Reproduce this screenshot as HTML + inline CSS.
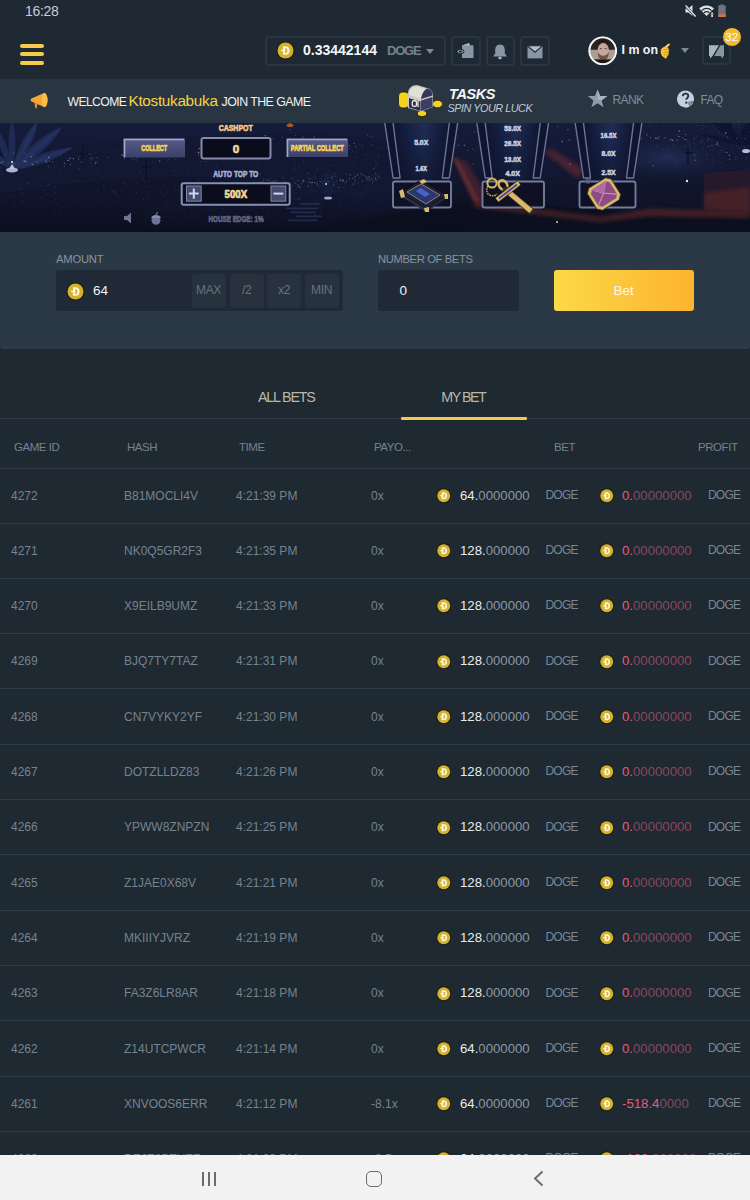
<!DOCTYPE html>
<html><head><meta charset="utf-8">
<style>
*{margin:0;padding:0;box-sizing:border-box}
html,body{width:750px;height:1200px;overflow:hidden;background:#1e2932;font-family:"Liberation Sans",sans-serif;position:relative}
.a{position:absolute}
.t{position:absolute;white-space:nowrap;line-height:1}
#hdr{left:0;top:0;width:750px;height:78.5px;background:#1f2933}
#wel{left:0;top:79px;width:750px;height:44px;background:#2a3542}
#game{left:0;top:123px;width:750px;height:109px;background:linear-gradient(#1a2445,#10162b 55%,#0b0f1d);overflow:hidden}
#panel{left:0;top:232px;width:750px;height:117px;background:#2b3947;border-bottom:2px solid #2f3c48;border-radius:0 0 3px 3px}
#nav{left:0;top:1155px;width:750px;height:45px;background:#f2f2f2}
.hl{position:absolute;left:0;width:750px;height:1px;background:#2f3a45}
.coin{position:absolute}
.row{position:absolute;left:0;width:750px;height:55.3px}
.row .c{position:absolute;top:20.3px;white-space:nowrap;line-height:14px;font-size:12px;color:#76838f}
.row .rl{position:absolute;left:0;top:54.3px;width:750px;height:1px;background:#2e3a44}
.id{left:11px}.hs{left:124px}.tm{left:236px}.po{left:371px}
.am{left:460px;font-size:13.2px!important;color:#8c98a3!important}
.am b{font-weight:normal;color:#e9ecef}
.pf{left:622px;font-size:13.2px!important;color:#8a485c!important}
.pf b{font-weight:normal;color:#e35d79}
.dg1{left:545.5px;top:19.5px!important;letter-spacing:-0.8px;color:#7a8692!important}.dg2{left:708px;top:19.5px!important;letter-spacing:-0.8px;color:#7a8692!important}
.cn{position:absolute;top:19.6px;width:15.5px;height:15.5px}
.c1{left:436.3px}.c2{left:598.5px}
.hd{position:absolute;top:441px;font-size:11.5px;line-height:12px;color:#75828e;white-space:nowrap;letter-spacing:-0.45px}
.btn{width:29.5px;height:29.5px;border:2px solid #2b3541;border-radius:3.5px}
.pb{top:274px;width:34px;height:33.5px;background:#27323e;border-radius:3px;color:#66737f;font-size:12px;line-height:33.5px;text-align:center;letter-spacing:-0.3px}
</style></head><body>
<svg width="0" height="0" style="position:absolute"><defs>
<symbol id="dg" viewBox="0 0 20 20"><circle cx="10" cy="10" r="9.6" fill="#1d1b12"/><circle cx="10" cy="10" r="8.4" fill="#d3b32d"/>
<path fill="#fbf6dc" fill-rule="evenodd" d="M7.3 5.4 H10 C12.8 5.4 14.3 7.3 14.3 10 C14.3 12.7 12.8 14.6 10 14.6 H7.3 Z M9.5 7.5 V12.5 H9.9 C11.4 12.5 12.1 11.5 12.1 10 C12.1 8.5 11.4 7.5 9.9 7.5 Z"/>
<rect x="5.4" y="9.2" width="4.6" height="1.5" fill="#fbf6dc"/></symbol>
</defs></svg>
<div id="hdr" class="a"></div>
<div class="t" style="left:25px;top:3.6px;font-size:14px;color:#c8ccd1;letter-spacing:-0.3px">16:28</div>
<!-- status icons -->
<svg class="a" style="left:684px;top:4px" width="44" height="14" viewBox="0 0 44 14">
 <path d="M1.5 4.6h2.8l4.2-3.6v11l-4.2-3.6H1.5z" fill="#dde1e5"/>
 <path d="M1 1.2l10.6 11.4" stroke="#1f2933" stroke-width="2.6"/>
 <path d="M1.6 1.6l10 10.8" stroke="#dde1e5" stroke-width="1.5"/>
 <path d="M15.2 4.6 C19.2 0.6 26 0.6 30 4.6 L22.6 12 Z" fill="#dde1e5"/>
 <path d="M17.6 6.6 C20.6 4 24.6 4 27.6 6.6" stroke="#1f2933" stroke-width="1.2" fill="none"/>
 <path d="M19.8 8.8 C21.6 7.4 23.6 7.4 25.4 8.8" stroke="#1f2933" stroke-width="1.2" fill="none"/>
 <path d="M26.5 10.5 l1.6 -2.6 1.6 2.6z M27.2 11 h1.8 v2 h-1.8z" fill="#dde1e5"/>
 <rect x="34.3" y="1.3" width="7.4" height="11.7" rx="1" fill="#6f757b"/>
 <rect x="34.3" y="10.2" width="7.4" height="2.8" rx="0.6" fill="#d9703f"/>
 <rect x="36.6" y="0.3" width="2.8" height="1.3" fill="#6f757b"/>
</svg>
<!-- hamburger -->
<div class="a" style="left:20px;top:43.6px;width:24px;height:4px;border-radius:2px;background:#f6cb4a"></div>
<div class="a" style="left:20px;top:52.3px;width:24px;height:4px;border-radius:2px;background:#f6cb4a"></div>
<div class="a" style="left:20px;top:61px;width:24px;height:4px;border-radius:2px;background:#f6cb4a"></div>
<!-- balance -->
<div class="a" style="left:265px;top:36px;width:181px;height:29.5px;border:2px solid #2b3541;border-radius:3.5px"></div>
<svg class="coin" style="left:275.5px;top:41px" width="19" height="19" viewBox="0 0 20 20"><use href="#dg"/></svg>
<div class="t" style="left:303px;top:42.5px;font-size:14px;font-weight:bold;color:#f4f5f6">0.33442144</div>
<div class="t" style="left:387px;top:44.3px;font-size:13px;font-weight:bold;color:#74818e;letter-spacing:-1.2px">DOGE</div>
<div class="a" style="left:425.5px;top:48.5px;width:0;height:0;border-left:4px solid transparent;border-right:4px solid transparent;border-top:5px solid #7c8997"></div>
<!-- icon buttons -->
<div class="a btn" style="left:451px;top:36px"></div>
<div class="a btn" style="left:485.5px;top:36px"></div>
<div class="a btn" style="left:520px;top:36px"></div>
<svg class="a" style="left:456px;top:42px" width="19" height="17" viewBox="0 0 19 17">
 <path d="M6 3.5 L13 1 L14 3.2 H17.5 V16 H6 Z" fill="#8796a5"/>
 <path d="M6 3.5 H14 L13 1 Z" fill="#a9b5c0"/>
 <ellipse cx="4.5" cy="9.5" rx="3.6" ry="2.2" fill="#8796a5" stroke="#1e2731" stroke-width="1"/>
 <ellipse cx="4.5" cy="9.5" rx="1.6" ry="0.9" fill="#1e2731"/>
</svg>
<svg class="a" style="left:492px;top:43px" width="16" height="17" viewBox="0 0 16 17">
 <path d="M8 1.5 C4.3 1.5 3.2 4.5 3.2 7.5 V10.6 L1 13.5 H15 L12.8 10.6 V7.5 C12.8 4.5 11.7 1.5 8 1.5Z" fill="#8796a5"/>
 <ellipse cx="8" cy="15" rx="1.8" ry="1.3" fill="#a9b5c0"/>
</svg>
<svg class="a" style="left:527px;top:44.5px" width="16" height="14" viewBox="0 0 16 14">
 <rect x="0.5" y="0.8" width="15" height="12.6" fill="#8796a5"/>
 <path d="M0.5 0.8 L8 7.2 L15.5 0.8Z" fill="#b3bec8" stroke="#1e2731" stroke-width="1.1"/>
</svg>
<div class="a" style="left:568px;top:35px;width:1px;height:32px;background:#212b36"></div>
<!-- avatar -->
<svg class="a" style="left:587.5px;top:36px" width="29.5" height="29.5" viewBox="0 0 30 30">
 <defs><clipPath id="avc"><circle cx="15" cy="15" r="13"/></clipPath></defs>
 <circle cx="15" cy="15" r="14.2" fill="#f4f4f4"/>
 <g clip-path="url(#avc)">
  <rect width="30" height="30" fill="#2b2624"/>
  <rect x="0" y="14" width="30" height="10" fill="#a8a097"/>
  <ellipse cx="15" cy="8" rx="10" ry="7" fill="#2a2320"/>
  <ellipse cx="15.5" cy="15" rx="5.8" ry="8" fill="#c4a69a"/>
  <path d="M9.8 16 C10 22 12.5 24.5 15.5 24.5 C18.5 24.5 21 22 21.2 16 C20 19 18 20 15.5 20 C13 20 11 19 9.8 16Z" fill="#6e5242"/>
  <path d="M9.5 9 C10.5 6.5 13 5.8 15.5 5.8 C18 5.8 20.5 6.5 21.5 9 L21.5 7 C20 4 17 3.5 15.5 3.5 C14 3.5 11 4 9.5 7Z" fill="#1f1a18"/>
  <rect x="0" y="24" width="30" height="6" fill="#1a1716"/>
  <path d="M12 12.8 H14 M17 12.8 H19" stroke="#4a3a32" stroke-width="0.9"/>
 </g>
 <circle cx="15" cy="15" r="13.6" fill="none" stroke="#f4f4f4" stroke-width="2"/>
</svg>
<div class="t" style="left:621.5px;top:44px;font-size:12.4px;font-weight:bold;color:#f2f3f4">I m on</div>
<svg class="a" style="left:658px;top:41.5px" width="14" height="18" viewBox="-1 -1 14 18">
 <path d="M1.3 8.5 C1.3 5.5 3.5 4 5.8 3.2 L9.6 0.4 C10.7 -0.3 11.8 0.9 11 1.9 L8.9 4.6 C10.3 5.6 10.6 7.4 9.9 8.9 C10.4 10.4 9.9 11.9 8.9 12.9 L7.4 15.6 C6.9 16.4 5.8 16.2 5.7 15.3 C2.9 14 1.3 11.4 1.3 8.5Z" fill="#f4c340" stroke="#2e2412" stroke-width="0.7"/>
 <path d="M4.5 7.2 L9.6 6.2 M4.6 9.6 L9.6 9.2 M4.8 11.8 L8.8 12" stroke="#c98f1e" stroke-width="0.8" fill="none"/>
 <path d="M9.6 0.8 L7 3.8" stroke="#fbe7a0" stroke-width="1" />
</svg>
<div class="a" style="left:681px;top:48px;width:0;height:0;border-left:4.5px solid transparent;border-right:4.5px solid transparent;border-top:5.5px solid #7a8795"></div>
<div class="a btn" style="left:701.5px;top:35.8px"></div>
<svg class="a" style="left:708px;top:43.5px" width="17" height="16" viewBox="0 0 17 16">
 <path d="M1 1.3 H11 L4.5 12 L2 14.5 V12 H1 Z" fill="#a7b4c1"/>
 <path d="M12.5 1.3 H16 V12 H15 V14.8 L12.6 12 H6.2 Z" fill="#8796a5"/>
</svg>
<div class="a" style="left:721.5px;top:26.5px;width:20.5px;height:20.5px;border-radius:50%;background:#f1bc2f;border:1.5px solid #1e2731"></div>
<div class="t" style="left:721.5px;top:31.5px;width:20.5px;text-align:center;font-size:11.5px;color:#fff">32</div>
<div id="wel" class="a"></div>
<svg class="a" style="left:29px;top:91px" width="21" height="19" viewBox="0 0 21 19">
 <path d="M2.5 7.5 L15 2 C16.5 1.4 18.5 4.5 18.5 9 C18.5 13.5 16.5 16.6 15 16 L2.5 10.5 C1.5 10 1.5 8 2.5 7.5Z" fill="#f7a53b"/>
 <path d="M15 2 C16.5 1.4 18.5 4.5 18.5 9 C18.5 13.5 16.5 16.6 15 16 C13.8 15.4 13 12.5 13 9 C13 5.5 13.8 2.6 15 2Z" fill="#f9bf45"/>
 <path d="M5.5 11.5 L8.5 12.8 L7.6 17 C7.4 17.8 6.2 17.6 6.2 16.8Z" fill="#f28f2f"/>
</svg>
<div class="t" style="left:67.5px;top:95.5px;font-size:12.2px;color:#eef0f2;letter-spacing:-0.6px">WELCOME</div>
<div class="t" style="left:128.5px;top:92.5px;font-size:15.3px;color:#f6d443;letter-spacing:-0.3px">Ktostukabuka</div>
<div class="t" style="left:221.5px;top:95.5px;font-size:12.4px;color:#eef0f2;letter-spacing:-0.55px">JOIN THE GAME</div>
<!-- tasks chest -->
<svg class="a" style="left:394px;top:80px" width="52" height="40" viewBox="0 0 52 40">
 <rect x="4.5" y="12" width="10.5" height="16" rx="4" fill="#f4d31f" stroke="#1a1a10" stroke-width="0.8"/>
 <ellipse cx="43.5" cy="24" rx="5" ry="3.8" fill="#f4d31f" stroke="#1a1a10" stroke-width="0.8"/>
 <ellipse cx="28" cy="33.5" rx="4.6" ry="3" fill="#f4d31f" stroke="#1a1a10" stroke-width="0.8"/>
 <path d="M14 14 C14 8 18 5 23 5 L33 8 C37 9 39 12 39 16 L39 27 L27 31.5 L14 28 Z" fill="#c9c8bf"/>
 <path d="M15 15 C15 10 18 6.5 23 6.5 L32 9 C30 11 28 14 27 19Z" fill="#e2e0d6"/>
 <path d="M27 19 L38.5 15.5 C38.5 11.5 36.5 9.5 33.5 8.5 C30.5 9.5 28 13 27 19Z" fill="#34365c"/>
 <path d="M27 20.5 L38.5 17 L38.5 27 L27 31Z" fill="#3b3d63"/>
 <path d="M15 17.5 L26.5 21 L26.5 31 L15 27.5Z" fill="#2c2e52"/>
 <path d="M15 17.5 L26.5 21" stroke="#e2e0d6" stroke-width="1"/>
 <rect x="18.3" y="20.8" width="4.2" height="5.6" rx="1.6" fill="none" stroke="#eceae2" stroke-width="1.4"/>
 <path d="M24 21 V27" stroke="#eceae2" stroke-width="1.3"/>
</svg>
<div class="t" style="left:449px;top:86.5px;font-size:14.5px;font-weight:bold;font-style:italic;color:#f4f5f6;letter-spacing:-0.4px">TASKS</div>
<div class="t" style="left:447.5px;top:103.2px;font-size:10.8px;font-style:italic;color:#c3cad2;letter-spacing:-0.45px">SPIN YOUR LUCK</div>
<svg class="a" style="left:587px;top:89px" width="21" height="19" viewBox="0 0 21 19">
 <path d="M10.5 0.5 L13.1 6.9 L20.2 7.1 L14.6 11.4 L16.6 18.3 L10.5 14.3 L4.4 18.3 L6.4 11.4 L0.8 7.1 L7.9 6.9Z" fill="#8e9cad"/>
 <path d="M10.5 0.5 L13.1 6.9 L20.2 7.1 L14.6 11.4 L10.5 10.5Z" fill="#a8b4c2"/>
</svg>
<div class="t" style="left:612.5px;top:93.5px;font-size:12px;color:#7f8c99;letter-spacing:-0.6px">RANK</div>
<svg class="a" style="left:676px;top:90px" width="20" height="18" viewBox="0 0 20 18">
 <path d="M9.5 0.5 A8.5 8.5 0 1 0 17.7 11.2 L13 16.5 Z" fill="#c5d0dc"/>
 <path d="M9.5 0.5 A8.5 8.5 0 0 1 17.7 11.2 L12.3 12 L13 16.5 A8.5 8.5 0 0 1 9.5 17.5" fill="#c5d0dc"/>
 <path d="M17.7 11.2 L12.3 12 L13 16.5Z" fill="#7e8b9a"/>
 <path d="M6.8 6.3 C6.8 4.5 8 3.6 9.6 3.6 C11.2 3.6 12.3 4.6 12.3 6 C12.3 7.8 10.3 8 10.3 9.8" stroke="#2a3542" stroke-width="1.9" fill="none"/>
 <circle cx="10.3" cy="12.6" r="1.2" fill="#2a3542"/>
</svg>
<div class="t" style="left:700.5px;top:93.5px;font-size:12px;color:#7f8c99;letter-spacing:-0.7px">FAQ</div>
<div id="game" class="a"></div>
<svg class="a" style="left:0;top:123px" width="750" height="109" viewBox="0 0 750 109">
<defs>
<linearGradient id="sky" x1="0" y1="0" x2="0" y2="1"><stop offset="0" stop-color="#151c3a"/><stop offset="0.45" stop-color="#121831"/><stop offset="1" stop-color="#0c1020"/></linearGradient>
<radialGradient id="hill" cx="0.5" cy="0.5" r="0.5"><stop offset="0" stop-color="#26345f" stop-opacity="0.9"/><stop offset="1" stop-color="#1a2348" stop-opacity="0"/></radialGradient>
<linearGradient id="pil" x1="0" y1="0" x2="1" y2="0"><stop offset="0" stop-color="#0f1530"/><stop offset="0.55" stop-color="#1f2d58"/><stop offset="1" stop-color="#101632"/></linearGradient>
<linearGradient id="pilv" x1="0" y1="0" x2="0" y2="1"><stop offset="0" stop-color="#0a0e20" stop-opacity="0"/><stop offset="1" stop-color="#0a0e20" stop-opacity="0.55"/></linearGradient>
<linearGradient id="btn" x1="0" y1="0" x2="0" y2="1"><stop offset="0" stop-color="#565d88"/><stop offset="1" stop-color="#3a4068"/></linearGradient>
<linearGradient id="red" x1="0" y1="0" x2="0" y2="1"><stop offset="0" stop-color="#3a1f2a"/><stop offset="1" stop-color="#20131d"/></linearGradient>
<linearGradient id="redr" x1="0" y1="0" x2="1" y2="1"><stop offset="0" stop-color="#1d1a33"/><stop offset="1" stop-color="#5a2a2a"/></linearGradient>
</defs>
<rect width="750" height="109" fill="url(#sky)"/>
<filter id="bl"><feGaussianBlur stdDeviation="2"/></filter>
<filter id="bl1"><feGaussianBlur stdDeviation="1"/></filter>

<path d="M0 30 C60 22 140 16 250 12 C330 10 380 15 400 20 L400 109 L0 109Z" fill="#121831"/>
<path d="M0 70 C80 58 160 52 230 55 L230 109 L0 109Z" fill="#10152c"/>
<path d="M140 90 C200 60 300 50 420 55 L420 109 L140 109Z" fill="#121833" opacity="0.9"/>
<rect x="0" y="86" width="480" height="23" fill="#0b0e1c" opacity="0.0"/>
<ellipse cx="668" cy="35" rx="62" ry="22" fill="url(#hill)" opacity="0.8"/>
<path d="M452 20 L455 35 L480 78 L668 94 L750 90 L750 109 L430 109 L430 20Z" fill="#0f1327" opacity="0.0"/>
<path d="M474 77 L668 93 L750 89 L750 109 L300 109 C340 100 380 92 474 77Z" fill="#0c0f1f" opacity="0.85"/>
<g filter="url(#bl)" opacity="0.75"><path d="M452 34 L466 38 L492 80 L474 80Z" fill="#4f2430"/><path d="M543 28 L552 26 L584 46 L578 56Z" fill="#5a2830"/><path d="M474 78 L600 94 L649 86 L750 88 L750 95 L649 93 L600 99 L474 84Z" fill="#5a2628"/></g>
<path d="M452 34 L458 36 L480 78 L474 79Z" fill="#7a3430" opacity="0.5" filter="url(#bl1)"/>
<path d="M704 50 L750 47 L750 90 L704 86Z" fill="#2a1a2a" opacity="0.8"/>
<path d="M704 70 L750 64 L750 90 L704 86Z" fill="#5a2828" opacity="0.6" filter="url(#bl)"/>
<path d="M12 47 Q9.8 20.9 -4 4 Q-3.4 25.8 12 47Z" fill="#24325f" opacity="0.7"/>
<path d="M12 47 Q19.0 18.9 12 -4 Q5.0 18.9 12 47Z" fill="#24325f" opacity="0.7"/>
<path d="M12 47 Q34.3 24.3 38 -2 Q18.3 15.8 12 47Z" fill="#24325f" opacity="0.7"/>
<path d="M12 47 Q46.7 31.7 62 4 Q32.3 15.0 12 47Z" fill="#24325f" opacity="0.7"/>
<path d="M12 47 Q49.2 42.8 74 24 Q43.0 25.9 12 47Z" fill="#24325f" opacity="0.7"/>
<path d="M12 47 Q6.2 33.3 -6 30 Q-2.0 42.0 12 47Z" fill="#24325f" opacity="0.7"/>
<path d="M12 47 Q29.8 21.9 38 -2 Q22.8 18.2 12 47Z" fill="#2c3c70" opacity="0.4"/>
<path d="M12 47 Q42.8 27.1 62 4 Q36.2 19.6 12 47Z" fill="#2c3c70" opacity="0.4"/>
<path d="M12 47 Q47.5 38.1 74 24 Q44.7 30.6 12 47Z" fill="#2c3c70" opacity="0.4"/>
<ellipse cx="12" cy="47" rx="6" ry="2.5" fill="#a9b4d4"/><path d="M9 46 L12 41 L15 46Z" fill="#b9c3e0"/><circle cx="12" cy="39" r="1" fill="#e0e5f5"/>
<path d="M83 25 V42 M79 31 H88" stroke="#0b0f20" stroke-width="1.5" opacity="0.8"/>
<path d="M146 37 V58 M141 44 H151" stroke="#0b0f20" stroke-width="1.5" opacity="0.8"/>
<path d="M688 25 V42 M684 30 H693" stroke="#0b0f20" stroke-width="1.5" opacity="0.8"/>
<g fill="#0e1330" opacity="0.9"><path d="M740 22 C728 14 718 6 712 0 L730 0 C735 8 740 14 740 22Z"/><path d="M740 22 C738 12 742 5 748 0 L750 0 L750 22Z"/><path d="M740 22 C725 20 712 16 700 10 C715 12 730 16 740 22Z"/></g>
<ellipse cx="746" cy="28" rx="4" ry="2" fill="#b4bedc"/>
<circle cx="242.9" cy="28.4" r="0.5" fill="#c9d3f2" opacity="0.49"/>
<circle cx="70.6" cy="41.8" r="0.5" fill="#c9d3f2" opacity="0.52"/>
<circle cx="161.0" cy="34.3" r="0.6" fill="#c9d3f2" opacity="0.23"/>
<circle cx="318.4" cy="19.8" r="0.5" fill="#c9d3f2" opacity="0.53"/>
<circle cx="473.0" cy="26.2" r="0.5" fill="#c9d3f2" opacity="0.40"/>
<circle cx="297.5" cy="17.8" r="0.6" fill="#c9d3f2" opacity="0.30"/>
<circle cx="108.2" cy="34.2" r="0.5" fill="#c9d3f2" opacity="0.40"/>
<circle cx="420.2" cy="30.7" r="0.5" fill="#c9d3f2" opacity="0.40"/>
<circle cx="479.2" cy="16.8" r="0.5" fill="#c9d3f2" opacity="0.40"/>
<circle cx="464.3" cy="22.3" r="0.8" fill="#c9d3f2" opacity="0.47"/>
<circle cx="349.2" cy="22.7" r="0.6" fill="#c9d3f2" opacity="0.48"/>
<circle cx="524.2" cy="11.0" r="0.7" fill="#c9d3f2" opacity="0.38"/>
<circle cx="567.9" cy="6.8" r="0.8" fill="#c9d3f2" opacity="0.35"/>
<circle cx="591.8" cy="36.8" r="0.7" fill="#c9d3f2" opacity="0.44"/>
<circle cx="445.8" cy="26.1" r="0.8" fill="#c9d3f2" opacity="0.22"/>
<circle cx="70.2" cy="35.3" r="0.7" fill="#c9d3f2" opacity="0.37"/>
<circle cx="498.1" cy="2.7" r="0.7" fill="#c9d3f2" opacity="0.43"/>
<circle cx="289.3" cy="15.7" r="0.8" fill="#c9d3f2" opacity="0.32"/>
<circle cx="458.2" cy="22.2" r="0.6" fill="#c9d3f2" opacity="0.47"/>
<circle cx="97.0" cy="34.5" r="0.6" fill="#c9d3f2" opacity="0.34"/>
<circle cx="301.2" cy="16.4" r="0.8" fill="#c9d3f2" opacity="0.50"/>
<circle cx="208.8" cy="29.5" r="0.8" fill="#c9d3f2" opacity="0.55"/>
<circle cx="512.0" cy="17.1" r="0.6" fill="#c9d3f2" opacity="0.25"/>
<circle cx="132.2" cy="33.1" r="0.8" fill="#c9d3f2" opacity="0.49"/>
<circle cx="136.8" cy="35.3" r="0.7" fill="#c9d3f2" opacity="0.20"/>
<circle cx="314.2" cy="13.9" r="0.6" fill="#c9d3f2" opacity="0.44"/>
<circle cx="386.6" cy="25.1" r="0.5" fill="#c9d3f2" opacity="0.36"/>
<circle cx="653.2" cy="42.8" r="0.8" fill="#c9d3f2" opacity="0.34"/>
<circle cx="295.6" cy="12.4" r="0.6" fill="#c9d3f2" opacity="0.22"/>
<circle cx="156.6" cy="31.5" r="0.6" fill="#c9d3f2" opacity="0.24"/>
<circle cx="450.5" cy="4.6" r="0.6" fill="#c9d3f2" opacity="0.39"/>
<circle cx="156.0" cy="27.0" r="0.7" fill="#c9d3f2" opacity="0.41"/>
<circle cx="355.6" cy="23.6" r="0.5" fill="#c9d3f2" opacity="0.50"/>
<circle cx="64.4" cy="40.4" r="0.7" fill="#c9d3f2" opacity="0.37"/>
<circle cx="519.0" cy="23.2" r="0.6" fill="#c9d3f2" opacity="0.53"/>
<circle cx="396.2" cy="24.0" r="0.6" fill="#c9d3f2" opacity="0.44"/>
<circle cx="482.2" cy="4.1" r="0.7" fill="#c9d3f2" opacity="0.38"/>
<circle cx="406.2" cy="22.6" r="0.6" fill="#c9d3f2" opacity="0.41"/>
<circle cx="591.3" cy="34.1" r="0.6" fill="#c9d3f2" opacity="0.48"/>
<circle cx="388.2" cy="20.8" r="0.5" fill="#c9d3f2" opacity="0.48"/>
<circle cx="354.2" cy="20.3" r="0.6" fill="#c9d3f2" opacity="0.44"/>
<circle cx="717.4" cy="20.1" r="0.7" fill="#c9d3f2" opacity="0.53"/>
<circle cx="273.5" cy="15.8" r="0.6" fill="#c9d3f2" opacity="0.32"/>
<circle cx="362.0" cy="22.8" r="0.5" fill="#c9d3f2" opacity="0.37"/>
<circle cx="489.7" cy="36.0" r="0.5" fill="#c9d3f2" opacity="0.49"/>
<circle cx="89.9" cy="30.9" r="0.6" fill="#c9d3f2" opacity="0.37"/>
<circle cx="133.9" cy="36.7" r="0.7" fill="#c9d3f2" opacity="0.23"/>
<circle cx="557.5" cy="3.8" r="0.6" fill="#c9d3f2" opacity="0.26"/>
<circle cx="95.3" cy="40.4" r="0.6" fill="#c9d3f2" opacity="0.41"/>
<circle cx="446.9" cy="21.3" r="0.7" fill="#c9d3f2" opacity="0.25"/>
<circle cx="411.2" cy="1.0" r="0.5" fill="#c9d3f2" opacity="0.38"/>
<circle cx="700.2" cy="19.5" r="0.6" fill="#c9d3f2" opacity="0.21"/>
<circle cx="159.6" cy="37.9" r="0.6" fill="#c9d3f2" opacity="0.47"/>
<circle cx="244.5" cy="17.6" r="0.5" fill="#c9d3f2" opacity="0.52"/>
<circle cx="265.3" cy="12.7" r="0.8" fill="#c9d3f2" opacity="0.43"/>
<circle cx="611.3" cy="23.3" r="0.6" fill="#c9d3f2" opacity="0.39"/>
<circle cx="392.6" cy="25.9" r="0.6" fill="#c9d3f2" opacity="0.41"/>
<circle cx="582.0" cy="6.7" r="0.6" fill="#c9d3f2" opacity="0.37"/>
<circle cx="543.9" cy="25.0" r="0.7" fill="#c9d3f2" opacity="0.44"/>
<circle cx="398.0" cy="22.4" r="0.8" fill="#c9d3f2" opacity="0.47"/>
<circle cx="79.6" cy="33.6" r="0.7" fill="#c9d3f2" opacity="0.21"/>
<circle cx="73.3" cy="35.8" r="0.8" fill="#c9d3f2" opacity="0.40"/>
<circle cx="570.0" cy="41.1" r="0.8" fill="#c9d3f2" opacity="0.31"/>
<circle cx="207.9" cy="20.2" r="0.6" fill="#c9d3f2" opacity="0.44"/>
<circle cx="419.6" cy="42.4" r="0.8" fill="#c9d3f2" opacity="0.25"/>
<circle cx="91.2" cy="35.2" r="0.8" fill="#c9d3f2" opacity="0.31"/>
<circle cx="503.4" cy="19.3" r="0.6" fill="#c9d3f2" opacity="0.43"/>
<circle cx="588.0" cy="40.4" r="0.6" fill="#c9d3f2" opacity="0.53"/>
<circle cx="482.6" cy="16.5" r="0.7" fill="#c9d3f2" opacity="0.51"/>
<circle cx="725.7" cy="9.9" r="0.8" fill="#c9d3f2" opacity="0.51"/>
<circle cx="122.1" cy="32.0" r="0.8" fill="#c9d3f2" opacity="0.55"/>
<circle cx="302.9" cy="14.3" r="0.8" fill="#c9d3f2" opacity="0.27"/>
<circle cx="238.9" cy="25.1" r="0.8" fill="#c9d3f2" opacity="0.35"/>
<circle cx="13.6" cy="40.3" r="0.7" fill="#c9d3f2" opacity="0.38"/>
<circle cx="221.6" cy="28.4" r="0.6" fill="#c9d3f2" opacity="0.54"/>
<circle cx="78.6" cy="36.0" r="0.7" fill="#c9d3f2" opacity="0.30"/>
<circle cx="679.4" cy="8.2" r="0.8" fill="#c9d3f2" opacity="0.50"/>
<circle cx="507.0" cy="42.6" r="0.8" fill="#c9d3f2" opacity="0.25"/>
<circle cx="689.4" cy="25.7" r="0.5" fill="#c9d3f2" opacity="0.30"/>
<circle cx="599.7" cy="8.3" r="0.5" fill="#c9d3f2" opacity="0.29"/>
<circle cx="12.6" cy="43.8" r="0.6" fill="#c9d3f2" opacity="0.22"/>
<circle cx="414.8" cy="41.7" r="0.7" fill="#c9d3f2" opacity="0.42"/>
<circle cx="32.4" cy="41.4" r="0.6" fill="#c9d3f2" opacity="0.53"/>
<circle cx="154.4" cy="25.6" r="0.7" fill="#c9d3f2" opacity="0.32"/>
<circle cx="13.6" cy="43.0" r="0.7" fill="#c9d3f2" opacity="0.21"/>
<circle cx="13.8" cy="30.0" r="0.8" fill="#c9d3f2" opacity="0.29"/>
<circle cx="335.3" cy="18.2" r="0.8" fill="#c9d3f2" opacity="0.43"/>
<circle cx="409.4" cy="40.0" r="0.7" fill="#c9d3f2" opacity="0.44"/>
<circle cx="736.8" cy="15.4" r="0.6" fill="#c9d3f2" opacity="0.34"/>
<circle cx="260.7" cy="16.6" r="0.5" fill="#c9d3f2" opacity="0.42"/>
<circle cx="498.9" cy="17.1" r="0.7" fill="#c9d3f2" opacity="0.41"/>
<circle cx="519.5" cy="2.0" r="0.6" fill="#c9d3f2" opacity="0.26"/>
<circle cx="334.4" cy="19.2" r="0.7" fill="#c9d3f2" opacity="0.33"/>
<circle cx="246.7" cy="28.3" r="0.5" fill="#c9d3f2" opacity="0.54"/>
<circle cx="232.2" cy="25.4" r="0.7" fill="#c9d3f2" opacity="0.26"/>
<circle cx="251.5" cy="16.9" r="0.6" fill="#c9d3f2" opacity="0.29"/>
<circle cx="582.2" cy="4.1" r="0.5" fill="#c9d3f2" opacity="0.25"/>
<circle cx="440.1" cy="17.7" r="0.7" fill="#c9d3f2" opacity="0.31"/>
<circle cx="174.6" cy="31.4" r="0.6" fill="#c9d3f2" opacity="0.43"/>
<circle cx="537.0" cy="39.6" r="0.8" fill="#c9d3f2" opacity="0.47"/>
<circle cx="540.5" cy="22.2" r="0.7" fill="#c9d3f2" opacity="0.45"/>
<circle cx="482.4" cy="2.0" r="0.8" fill="#c9d3f2" opacity="0.46"/>
<circle cx="378.3" cy="24.5" r="0.6" fill="#c9d3f2" opacity="0.23"/>
<circle cx="31.4" cy="33.6" r="0.7" fill="#c9d3f2" opacity="0.54"/>
<circle cx="282.5" cy="14.5" r="0.5" fill="#c9d3f2" opacity="0.42"/>
<circle cx="510.5" cy="22.0" r="0.5" fill="#c9d3f2" opacity="0.36"/>
<circle cx="52.6" cy="38.7" r="0.5" fill="#c9d3f2" opacity="0.43"/>
<circle cx="49.5" cy="38.3" r="0.5" fill="#c9d3f2" opacity="0.50"/>
<circle cx="176.1" cy="26.6" r="0.6" fill="#c9d3f2" opacity="0.28"/>
<circle cx="487.4" cy="20.7" r="0.8" fill="#c9d3f2" opacity="0.23"/>
<circle cx="474.6" cy="8.9" r="0.6" fill="#c9d3f2" opacity="0.32"/>
<circle cx="488.7" cy="31.2" r="0.6" fill="#c9d3f2" opacity="0.20"/>
<circle cx="45.5" cy="38.1" r="0.6" fill="#c9d3f2" opacity="0.44"/>
<circle cx="218.1" cy="32.7" r="0.7" fill="#c9d3f2" opacity="0.36"/>
<circle cx="349.8" cy="25.5" r="0.6" fill="#c9d3f2" opacity="0.31"/>
<circle cx="64.4" cy="43.2" r="0.8" fill="#c9d3f2" opacity="0.21"/>
<circle cx="344.2" cy="23.5" r="0.8" fill="#c9d3f2" opacity="0.55"/>
<circle cx="290.1" cy="6.6" r="0.6" fill="#c9d3f2" opacity="0.23"/>
<circle cx="67.7" cy="37.2" r="0.7" fill="#c9d3f2" opacity="0.25"/>
<circle cx="615.2" cy="22.9" r="0.7" fill="#c9d3f2" opacity="0.28"/>
<circle cx="2.7" cy="38.7" r="0.8" fill="#c9d3f2" opacity="0.44"/>
<circle cx="304.1" cy="16.3" r="0.8" fill="#c9d3f2" opacity="0.31"/>
<circle cx="630.2" cy="0.1" r="0.8" fill="#c9d3f2" opacity="0.24"/>
<circle cx="694.8" cy="32.1" r="0.7" fill="#c9d3f2" opacity="0.29"/>
<circle cx="48.7" cy="34.5" r="0.8" fill="#c9d3f2" opacity="0.55"/>
<circle cx="441.9" cy="16.2" r="0.8" fill="#c9d3f2" opacity="0.46"/>
<circle cx="496.5" cy="28.6" r="0.6" fill="#c9d3f2" opacity="0.29"/>
<circle cx="199.3" cy="25.5" r="0.7" fill="#c9d3f2" opacity="0.47"/>
<circle cx="320.8" cy="17.6" r="0.5" fill="#c9d3f2" opacity="0.48"/>
<circle cx="473.2" cy="41.1" r="0.6" fill="#c9d3f2" opacity="0.45"/>
<circle cx="37.1" cy="38.9" r="0.6" fill="#c9d3f2" opacity="0.43"/>
<circle cx="214.7" cy="22.6" r="0.5" fill="#c9d3f2" opacity="0.52"/>
<circle cx="412.6" cy="7.7" r="0.8" fill="#c9d3f2" opacity="0.32"/>
<circle cx="223.3" cy="25.6" r="0.7" fill="#c9d3f2" opacity="0.34"/>
<circle cx="179.0" cy="18.6" r="0.8" fill="#c9d3f2" opacity="0.40"/>
<circle cx="295.8" cy="17.6" r="0.6" fill="#c9d3f2" opacity="0.38"/>
<circle cx="249.6" cy="26.6" r="0.8" fill="#c9d3f2" opacity="0.35"/>
<circle cx="410.8" cy="11.0" r="0.6" fill="#c9d3f2" opacity="0.32"/>
<circle cx="68.3" cy="37.4" r="0.6" fill="#c9d3f2" opacity="0.51"/>
<circle cx="562.2" cy="18.6" r="0.8" fill="#c9d3f2" opacity="0.46"/>
<circle cx="157.5" cy="34.1" r="0.7" fill="#c9d3f2" opacity="0.32"/>
<circle cx="46.5" cy="36.9" r="0.6" fill="#c9d3f2" opacity="0.44"/>
<circle cx="396.9" cy="32.2" r="0.6" fill="#c9d3f2" opacity="0.23"/>
<circle cx="672.6" cy="17.3" r="0.8" fill="#c9d3f2" opacity="0.53"/>
<circle cx="24.2" cy="38.2" r="0.8" fill="#c9d3f2" opacity="0.54"/>
<circle cx="367.4" cy="12.0" r="0.5" fill="#c9d3f2" opacity="0.34"/>
<circle cx="695.1" cy="37.2" r="0.8" fill="#c9d3f2" opacity="0.29"/>
<circle cx="81.8" cy="39.0" r="0.5" fill="#c9d3f2" opacity="0.53"/>
<circle cx="541.3" cy="29.1" r="0.8" fill="#c9d3f2" opacity="0.23"/>
<circle cx="582.6" cy="0.1" r="0.6" fill="#c9d3f2" opacity="0.28"/>
<circle cx="96.0" cy="39.3" r="0.7" fill="#c9d3f2" opacity="0.38"/>
<circle cx="328.1" cy="18.3" r="0.7" fill="#c9d3f2" opacity="0.38"/>
<circle cx="437.2" cy="17.5" r="0.6" fill="#c9d3f2" opacity="0.48"/>
<circle cx="0.9" cy="40.1" r="0.7" fill="#c9d3f2" opacity="0.55"/>
<circle cx="209.0" cy="24.3" r="0.6" fill="#c9d3f2" opacity="0.37"/>
<circle cx="176.1" cy="36.7" r="0.6" fill="#c9d3f2" opacity="0.21"/>
<circle cx="308.9" cy="16.3" r="0.6" fill="#c9d3f2" opacity="0.37"/>
<circle cx="505.8" cy="18.9" r="0.7" fill="#c9d3f2" opacity="0.28"/>
<circle cx="318.2" cy="16.5" r="0.7" fill="#c9d3f2" opacity="0.28"/>
<circle cx="25.6" cy="38.0" r="0.8" fill="#c9d3f2" opacity="0.27"/>
<circle cx="597.8" cy="33.3" r="0.5" fill="#c9d3f2" opacity="0.27"/>
<circle cx="727.4" cy="14.0" r="0.6" fill="#c9d3f2" opacity="0.36"/>
<circle cx="198.8" cy="31.6" r="0.7" fill="#c9d3f2" opacity="0.24"/>
<circle cx="467.7" cy="27.5" r="0.6" fill="#c9d3f2" opacity="0.37"/>
<circle cx="447.1" cy="18.7" r="0.5" fill="#c9d3f2" opacity="0.26"/>
<circle cx="337.2" cy="17.8" r="0.5" fill="#c9d3f2" opacity="0.55"/>
<circle cx="498.3" cy="17.0" r="0.7" fill="#c9d3f2" opacity="0.54"/>
<circle cx="331.8" cy="15.0" r="0.5" fill="#c9d3f2" opacity="0.20"/>
<circle cx="209.9" cy="21.4" r="0.5" fill="#c9d3f2" opacity="0.40"/>
<circle cx="569.1" cy="17.1" r="0.7" fill="#c9d3f2" opacity="0.49"/>
<circle cx="324.3" cy="26.0" r="0.5" fill="#c9d3f2" opacity="0.45"/>
<circle cx="146.8" cy="27.5" r="0.7" fill="#c9d3f2" opacity="0.33"/>
<circle cx="26.1" cy="39.0" r="0.5" fill="#c9d3f2" opacity="0.48"/>
<circle cx="46.5" cy="39.2" r="0.7" fill="#c9d3f2" opacity="0.33"/>
<circle cx="251.2" cy="15.4" r="0.5" fill="#c9d3f2" opacity="0.29"/>
<circle cx="537.5" cy="14.2" r="0.7" fill="#c9d3f2" opacity="0.30"/>
<circle cx="541.2" cy="26.8" r="0.5" fill="#c9d3f2" opacity="0.21"/>
<circle cx="175.4" cy="19.8" r="0.8" fill="#c9d3f2" opacity="0.48"/>
<circle cx="372.4" cy="22.1" r="0.5" fill="#c9d3f2" opacity="0.48"/>
<circle cx="553.9" cy="37.0" r="0.6" fill="#c9d3f2" opacity="0.41"/>
<circle cx="245.8" cy="23.2" r="0.5" fill="#c9d3f2" opacity="0.38"/>
<circle cx="293.8" cy="19.8" r="0.6" fill="#c9d3f2" opacity="0.29"/>
<circle cx="48.5" cy="43.6" r="0.7" fill="#c9d3f2" opacity="0.26"/>
<circle cx="319.9" cy="18.8" r="0.5" fill="#c9d3f2" opacity="0.55"/>
<circle cx="198.7" cy="29.6" r="0.8" fill="#c9d3f2" opacity="0.55"/>
<circle cx="345.7" cy="20.0" r="0.6" fill="#c9d3f2" opacity="0.46"/>
<circle cx="656.0" cy="15.3" r="0.6" fill="#c9d3f2" opacity="0.37"/>
<circle cx="641.0" cy="15.5" r="0.6" fill="#c9d3f2" opacity="0.35"/>
<circle cx="716.3" cy="21.3" r="0.6" fill="#c9d3f2" opacity="0.42"/>
<circle cx="729.1" cy="32.2" r="0.6" fill="#c9d3f2" opacity="0.45"/>
<circle cx="639.3" cy="18.8" r="0.6" fill="#c9d3f2" opacity="0.60"/>
<circle cx="624.1" cy="18.1" r="0.6" fill="#c9d3f2" opacity="0.44"/>
<circle cx="708.7" cy="23.4" r="0.6" fill="#c9d3f2" opacity="0.31"/>
<circle cx="646.7" cy="11.7" r="0.6" fill="#c9d3f2" opacity="0.34"/>
<circle cx="634.4" cy="21.8" r="0.6" fill="#c9d3f2" opacity="0.58"/>
<circle cx="655.9" cy="14.9" r="0.6" fill="#c9d3f2" opacity="0.56"/>
<circle cx="665.0" cy="14.8" r="0.6" fill="#c9d3f2" opacity="0.58"/>
<circle cx="624.5" cy="25.7" r="0.6" fill="#c9d3f2" opacity="0.48"/>
<circle cx="685.2" cy="16.3" r="0.6" fill="#c9d3f2" opacity="0.34"/>
<circle cx="636.1" cy="20.5" r="0.6" fill="#c9d3f2" opacity="0.38"/>
<circle cx="682.7" cy="14.7" r="0.6" fill="#c9d3f2" opacity="0.30"/>
<circle cx="650.6" cy="14.5" r="0.6" fill="#c9d3f2" opacity="0.50"/>
<circle cx="633.8" cy="18.0" r="0.6" fill="#c9d3f2" opacity="0.54"/>
<circle cx="676.7" cy="16.8" r="0.6" fill="#c9d3f2" opacity="0.32"/>
<circle cx="624.0" cy="19.0" r="0.6" fill="#c9d3f2" opacity="0.49"/>
<circle cx="622.8" cy="23.9" r="0.6" fill="#c9d3f2" opacity="0.35"/>
<circle cx="694.1" cy="15.3" r="0.6" fill="#c9d3f2" opacity="0.39"/>
<circle cx="724.5" cy="29.0" r="0.6" fill="#c9d3f2" opacity="0.39"/>
<circle cx="678.8" cy="13.7" r="0.6" fill="#c9d3f2" opacity="0.56"/>
<circle cx="729.6" cy="36.5" r="0.6" fill="#c9d3f2" opacity="0.41"/>
<circle cx="635.3" cy="18.1" r="0.6" fill="#c9d3f2" opacity="0.30"/>
<circle cx="718.4" cy="22.5" r="0.6" fill="#c9d3f2" opacity="0.43"/>
<circle cx="708.8" cy="16.1" r="0.6" fill="#c9d3f2" opacity="0.44"/>
<circle cx="631.2" cy="22.2" r="0.6" fill="#c9d3f2" opacity="0.30"/>
<circle cx="677.1" cy="11.8" r="0.6" fill="#c9d3f2" opacity="0.33"/>
<circle cx="685.4" cy="11.6" r="0.6" fill="#c9d3f2" opacity="0.41"/>
<circle cx="671.5" cy="16.3" r="0.6" fill="#c9d3f2" opacity="0.46"/>
<circle cx="721.2" cy="27.3" r="0.6" fill="#c9d3f2" opacity="0.33"/>
<circle cx="669.9" cy="17.2" r="0.6" fill="#c9d3f2" opacity="0.36"/>
<circle cx="626.9" cy="14.4" r="0.6" fill="#c9d3f2" opacity="0.58"/>
<circle cx="727.1" cy="29.5" r="0.6" fill="#c9d3f2" opacity="0.58"/>
<circle cx="657.8" cy="15.4" r="0.6" fill="#c9d3f2" opacity="0.57"/>
<circle cx="685.2" cy="16.5" r="0.6" fill="#c9d3f2" opacity="0.54"/>
<circle cx="638.2" cy="16.4" r="0.6" fill="#c9d3f2" opacity="0.42"/>
<circle cx="711.9" cy="22.2" r="0.6" fill="#c9d3f2" opacity="0.37"/>
<circle cx="659.2" cy="13.8" r="0.6" fill="#c9d3f2" opacity="0.46"/>
<rect x="145.8" y="32.6" width="0.9" height="0.9" fill="#9aa6cc" opacity="0.13"/>
<rect x="275.5" y="91.5" width="0.9" height="0.9" fill="#9aa6cc" opacity="0.09"/>
<rect x="213.7" y="80.6" width="0.9" height="0.9" fill="#9aa6cc" opacity="0.09"/>
<rect x="318.5" y="24.9" width="0.9" height="0.9" fill="#9aa6cc" opacity="0.21"/>
<rect x="209.0" y="70.2" width="0.9" height="0.9" fill="#9aa6cc" opacity="0.15"/>
<rect x="159.6" y="67.6" width="0.9" height="0.9" fill="#9aa6cc" opacity="0.17"/>
<rect x="250.4" y="54.7" width="0.9" height="0.9" fill="#9aa6cc" opacity="0.18"/>
<rect x="8.9" y="73.2" width="0.9" height="0.9" fill="#9aa6cc" opacity="0.19"/>
<rect x="89.4" y="82.4" width="0.9" height="0.9" fill="#9aa6cc" opacity="0.25"/>
<rect x="174.1" y="35.8" width="0.9" height="0.9" fill="#9aa6cc" opacity="0.18"/>
<rect x="40.7" y="37.3" width="0.9" height="0.9" fill="#9aa6cc" opacity="0.17"/>
<rect x="34.9" y="60.0" width="0.9" height="0.9" fill="#9aa6cc" opacity="0.19"/>
<rect x="15.5" y="74.3" width="0.9" height="0.9" fill="#9aa6cc" opacity="0.10"/>
<rect x="278.7" y="81.5" width="0.9" height="0.9" fill="#9aa6cc" opacity="0.19"/>
<rect x="20.6" y="64.8" width="0.9" height="0.9" fill="#9aa6cc" opacity="0.16"/>
<rect x="361.3" y="24.7" width="0.9" height="0.9" fill="#9aa6cc" opacity="0.27"/>
<rect x="378.5" y="76.4" width="0.9" height="0.9" fill="#9aa6cc" opacity="0.26"/>
<rect x="73.6" y="98.7" width="0.9" height="0.9" fill="#9aa6cc" opacity="0.19"/>
<rect x="363.5" y="92.7" width="0.9" height="0.9" fill="#9aa6cc" opacity="0.12"/>
<rect x="299.6" y="94.2" width="0.9" height="0.9" fill="#9aa6cc" opacity="0.09"/>
<rect x="133.3" y="81.4" width="0.9" height="0.9" fill="#9aa6cc" opacity="0.11"/>
<rect x="340.7" y="37.5" width="0.9" height="0.9" fill="#9aa6cc" opacity="0.26"/>
<rect x="54.6" y="63.9" width="0.9" height="0.9" fill="#9aa6cc" opacity="0.28"/>
<rect x="79.2" y="45.6" width="0.9" height="0.9" fill="#9aa6cc" opacity="0.19"/>
<rect x="121.2" y="27.0" width="0.9" height="0.9" fill="#9aa6cc" opacity="0.12"/>
<rect x="61.3" y="95.4" width="0.9" height="0.9" fill="#9aa6cc" opacity="0.23"/>
<rect x="340.3" y="28.4" width="0.9" height="0.9" fill="#9aa6cc" opacity="0.25"/>
<rect x="43.7" y="66.2" width="0.9" height="0.9" fill="#9aa6cc" opacity="0.22"/>
<rect x="136.7" y="90.3" width="0.9" height="0.9" fill="#9aa6cc" opacity="0.20"/>
<rect x="220.4" y="90.6" width="0.9" height="0.9" fill="#9aa6cc" opacity="0.10"/>
<rect x="377.3" y="67.5" width="0.9" height="0.9" fill="#9aa6cc" opacity="0.17"/>
<rect x="303.1" y="38.0" width="0.9" height="0.9" fill="#9aa6cc" opacity="0.30"/>
<rect x="219.4" y="48.6" width="0.9" height="0.9" fill="#9aa6cc" opacity="0.25"/>
<rect x="168.1" y="35.8" width="0.9" height="0.9" fill="#9aa6cc" opacity="0.24"/>
<rect x="18.4" y="87.2" width="0.9" height="0.9" fill="#9aa6cc" opacity="0.14"/>
<rect x="242.9" y="98.7" width="0.9" height="0.9" fill="#9aa6cc" opacity="0.21"/>
<rect x="252.2" y="43.7" width="0.9" height="0.9" fill="#9aa6cc" opacity="0.08"/>
<rect x="12.8" y="39.9" width="0.9" height="0.9" fill="#9aa6cc" opacity="0.22"/>
<rect x="164.2" y="62.1" width="0.9" height="0.9" fill="#9aa6cc" opacity="0.28"/>
<rect x="50.2" y="44.1" width="0.9" height="0.9" fill="#9aa6cc" opacity="0.22"/>
<rect x="8.5" y="29.8" width="0.9" height="0.9" fill="#9aa6cc" opacity="0.16"/>
<rect x="40.4" y="53.8" width="0.9" height="0.9" fill="#9aa6cc" opacity="0.13"/>
<rect x="221.8" y="66.9" width="0.9" height="0.9" fill="#9aa6cc" opacity="0.12"/>
<rect x="237.1" y="57.3" width="0.9" height="0.9" fill="#9aa6cc" opacity="0.11"/>
<rect x="355.9" y="34.3" width="0.9" height="0.9" fill="#9aa6cc" opacity="0.11"/>
<rect x="36.4" y="74.1" width="0.9" height="0.9" fill="#9aa6cc" opacity="0.27"/>
<rect x="297.2" y="49.7" width="0.9" height="0.9" fill="#9aa6cc" opacity="0.14"/>
<rect x="4.4" y="75.1" width="0.9" height="0.9" fill="#9aa6cc" opacity="0.20"/>
<rect x="133.1" y="73.0" width="0.9" height="0.9" fill="#9aa6cc" opacity="0.18"/>
<rect x="356.1" y="76.9" width="0.9" height="0.9" fill="#9aa6cc" opacity="0.13"/>
<rect x="343.3" y="17.5" width="0.9" height="0.9" fill="#9aa6cc" opacity="0.20"/>
<rect x="154.3" y="41.1" width="0.9" height="0.9" fill="#9aa6cc" opacity="0.09"/>
<rect x="296.0" y="17.0" width="0.9" height="0.9" fill="#9aa6cc" opacity="0.20"/>
<rect x="357.5" y="25.4" width="0.9" height="0.9" fill="#9aa6cc" opacity="0.12"/>
<rect x="231.1" y="60.1" width="0.9" height="0.9" fill="#9aa6cc" opacity="0.22"/>
<rect x="309.1" y="30.1" width="0.9" height="0.9" fill="#9aa6cc" opacity="0.15"/>
<rect x="114.1" y="28.3" width="0.9" height="0.9" fill="#9aa6cc" opacity="0.28"/>
<rect x="297.5" y="76.1" width="0.9" height="0.9" fill="#9aa6cc" opacity="0.08"/>
<rect x="320.9" y="78.3" width="0.9" height="0.9" fill="#9aa6cc" opacity="0.18"/>
<rect x="281.9" y="54.4" width="0.9" height="0.9" fill="#9aa6cc" opacity="0.13"/>
<rect x="40.0" y="44.8" width="0.9" height="0.9" fill="#9aa6cc" opacity="0.09"/>
<rect x="127.5" y="81.0" width="0.9" height="0.9" fill="#9aa6cc" opacity="0.23"/>
<rect x="321.2" y="75.4" width="0.9" height="0.9" fill="#9aa6cc" opacity="0.14"/>
<rect x="210.4" y="54.9" width="0.9" height="0.9" fill="#9aa6cc" opacity="0.25"/>
<rect x="198.8" y="41.7" width="0.9" height="0.9" fill="#9aa6cc" opacity="0.22"/>
<rect x="366.8" y="31.6" width="0.9" height="0.9" fill="#9aa6cc" opacity="0.27"/>
<rect x="5.8" y="48.0" width="0.9" height="0.9" fill="#9aa6cc" opacity="0.13"/>
<rect x="282.7" y="95.4" width="0.9" height="0.9" fill="#9aa6cc" opacity="0.24"/>
<rect x="124.2" y="90.9" width="0.9" height="0.9" fill="#9aa6cc" opacity="0.15"/>
<rect x="90.9" y="93.1" width="0.9" height="0.9" fill="#9aa6cc" opacity="0.22"/>
<rect x="263.3" y="72.4" width="0.9" height="0.9" fill="#9aa6cc" opacity="0.30"/>
<rect x="178.4" y="87.4" width="0.9" height="0.9" fill="#9aa6cc" opacity="0.23"/>
<rect x="325.9" y="51.9" width="0.9" height="0.9" fill="#9aa6cc" opacity="0.24"/>
<rect x="216.7" y="44.4" width="0.9" height="0.9" fill="#9aa6cc" opacity="0.13"/>
<rect x="236.6" y="25.1" width="0.9" height="0.9" fill="#9aa6cc" opacity="0.28"/>
<rect x="54.9" y="29.4" width="0.9" height="0.9" fill="#9aa6cc" opacity="0.10"/>
<rect x="353.0" y="43.2" width="0.9" height="0.9" fill="#9aa6cc" opacity="0.11"/>
<rect x="10.9" y="32.4" width="0.9" height="0.9" fill="#9aa6cc" opacity="0.23"/>
<rect x="240.9" y="75.3" width="0.9" height="0.9" fill="#9aa6cc" opacity="0.24"/>
<rect x="25.0" y="70.8" width="0.9" height="0.9" fill="#9aa6cc" opacity="0.16"/>
<rect x="310.7" y="84.7" width="0.9" height="0.9" fill="#9aa6cc" opacity="0.28"/>
<rect x="25.1" y="90.6" width="0.9" height="0.9" fill="#9aa6cc" opacity="0.28"/>
<rect x="358.8" y="22.3" width="0.9" height="0.9" fill="#9aa6cc" opacity="0.13"/>
<rect x="42.5" y="30.5" width="0.9" height="0.9" fill="#9aa6cc" opacity="0.27"/>
<rect x="308.6" y="69.0" width="0.9" height="0.9" fill="#9aa6cc" opacity="0.26"/>
<rect x="240.0" y="42.0" width="0.9" height="0.9" fill="#9aa6cc" opacity="0.10"/>
<rect x="37.2" y="82.6" width="0.9" height="0.9" fill="#9aa6cc" opacity="0.13"/>
<rect x="121.3" y="56.4" width="0.9" height="0.9" fill="#9aa6cc" opacity="0.08"/>
<rect x="97.5" y="46.5" width="0.9" height="0.9" fill="#9aa6cc" opacity="0.24"/>
<rect x="139.8" y="48.0" width="0.9" height="0.9" fill="#9aa6cc" opacity="0.29"/>
<rect x="191.4" y="88.2" width="0.9" height="0.9" fill="#9aa6cc" opacity="0.22"/>
<rect x="11.8" y="58.6" width="0.9" height="0.9" fill="#9aa6cc" opacity="0.18"/>
<rect x="293.7" y="45.2" width="0.9" height="0.9" fill="#9aa6cc" opacity="0.24"/>
<rect x="204.4" y="37.6" width="0.9" height="0.9" fill="#9aa6cc" opacity="0.27"/>
<rect x="34.5" y="87.1" width="0.9" height="0.9" fill="#9aa6cc" opacity="0.12"/>
<rect x="0.5" y="44.1" width="0.9" height="0.9" fill="#9aa6cc" opacity="0.25"/>
<rect x="371.6" y="12.8" width="0.9" height="0.9" fill="#9aa6cc" opacity="0.19"/>
<rect x="186.8" y="84.0" width="0.9" height="0.9" fill="#9aa6cc" opacity="0.12"/>
<rect x="187.9" y="48.5" width="0.9" height="0.9" fill="#9aa6cc" opacity="0.26"/>
<rect x="99.0" y="95.8" width="0.9" height="0.9" fill="#9aa6cc" opacity="0.14"/>
<rect x="81.6" y="77.8" width="0.9" height="0.9" fill="#9aa6cc" opacity="0.19"/>
<rect x="41.8" y="73.8" width="0.9" height="0.9" fill="#9aa6cc" opacity="0.10"/>
<rect x="299.4" y="74.5" width="0.9" height="0.9" fill="#9aa6cc" opacity="0.25"/>
<rect x="238.6" y="47.6" width="0.9" height="0.9" fill="#9aa6cc" opacity="0.17"/>
<rect x="149.9" y="91.6" width="0.9" height="0.9" fill="#9aa6cc" opacity="0.10"/>
<rect x="337.6" y="16.2" width="0.9" height="0.9" fill="#9aa6cc" opacity="0.13"/>
<rect x="100.0" y="92.6" width="0.9" height="0.9" fill="#9aa6cc" opacity="0.19"/>
<rect x="144.1" y="91.1" width="0.9" height="0.9" fill="#9aa6cc" opacity="0.13"/>
<rect x="175.1" y="63.3" width="0.9" height="0.9" fill="#9aa6cc" opacity="0.25"/>
<rect x="286.1" y="70.4" width="0.9" height="0.9" fill="#9aa6cc" opacity="0.16"/>
<rect x="124.1" y="35.9" width="0.9" height="0.9" fill="#9aa6cc" opacity="0.27"/>
<rect x="251.6" y="78.9" width="0.9" height="0.9" fill="#9aa6cc" opacity="0.12"/>
<rect x="166.7" y="82.4" width="0.9" height="0.9" fill="#9aa6cc" opacity="0.21"/>
<rect x="47.9" y="61.1" width="0.9" height="0.9" fill="#9aa6cc" opacity="0.27"/>
<rect x="90.4" y="39.9" width="0.9" height="0.9" fill="#9aa6cc" opacity="0.15"/>
<rect x="267.2" y="87.1" width="0.9" height="0.9" fill="#9aa6cc" opacity="0.11"/>
<rect x="59.3" y="45.2" width="0.9" height="0.9" fill="#9aa6cc" opacity="0.15"/>
<rect x="198.4" y="33.4" width="0.9" height="0.9" fill="#9aa6cc" opacity="0.15"/>
<rect x="71.9" y="98.2" width="0.9" height="0.9" fill="#9aa6cc" opacity="0.24"/>
<rect x="38.7" y="97.3" width="0.9" height="0.9" fill="#9aa6cc" opacity="0.10"/>
<rect x="146.0" y="98.8" width="0.9" height="0.9" fill="#9aa6cc" opacity="0.25"/>
<rect x="278.7" y="53.0" width="0.9" height="0.9" fill="#9aa6cc" opacity="0.12"/>
<rect x="242.4" y="27.2" width="0.9" height="0.9" fill="#9aa6cc" opacity="0.13"/>
<rect x="147.6" y="25.6" width="0.9" height="0.9" fill="#9aa6cc" opacity="0.17"/>
<rect x="300.6" y="74.2" width="0.9" height="0.9" fill="#9aa6cc" opacity="0.19"/>
<rect x="240.3" y="56.3" width="0.9" height="0.9" fill="#9aa6cc" opacity="0.11"/>
<rect x="229.4" y="51.9" width="0.9" height="0.9" fill="#9aa6cc" opacity="0.24"/>
<rect x="345.0" y="50.8" width="0.9" height="0.9" fill="#9aa6cc" opacity="0.21"/>
<rect x="284.7" y="51.7" width="0.9" height="0.9" fill="#9aa6cc" opacity="0.13"/>
<rect x="274.4" y="90.0" width="0.9" height="0.9" fill="#9aa6cc" opacity="0.25"/>
<rect x="266.0" y="87.8" width="0.9" height="0.9" fill="#9aa6cc" opacity="0.23"/>
<rect x="243.8" y="55.5" width="0.9" height="0.9" fill="#9aa6cc" opacity="0.15"/>
<rect x="238.7" y="26.6" width="0.9" height="0.9" fill="#9aa6cc" opacity="0.17"/>
<rect x="297.3" y="75.9" width="0.9" height="0.9" fill="#9aa6cc" opacity="0.22"/>
<rect x="95.0" y="57.1" width="0.9" height="0.9" fill="#9aa6cc" opacity="0.18"/>
<rect x="236.2" y="52.0" width="0.9" height="0.9" fill="#9aa6cc" opacity="0.23"/>
<rect x="353.5" y="29.1" width="0.9" height="0.9" fill="#9aa6cc" opacity="0.22"/>
<rect x="295.7" y="48.6" width="0.9" height="0.9" fill="#9aa6cc" opacity="0.19"/>
<rect x="370.4" y="15.8" width="0.9" height="0.9" fill="#9aa6cc" opacity="0.20"/>
<rect x="61.1" y="84.1" width="0.9" height="0.9" fill="#9aa6cc" opacity="0.29"/>
<rect x="197.3" y="28.7" width="0.9" height="0.9" fill="#9aa6cc" opacity="0.21"/>
<rect x="205.6" y="77.5" width="0.9" height="0.9" fill="#9aa6cc" opacity="0.19"/>
<rect x="242.9" y="86.1" width="0.9" height="0.9" fill="#9aa6cc" opacity="0.19"/>
<rect x="155.9" y="96.0" width="0.9" height="0.9" fill="#9aa6cc" opacity="0.13"/>
<rect x="260.1" y="50.0" width="0.9" height="0.9" fill="#9aa6cc" opacity="0.25"/>
<rect x="46.5" y="98.9" width="0.9" height="0.9" fill="#9aa6cc" opacity="0.16"/>
<rect x="21.5" y="48.5" width="0.9" height="0.9" fill="#9aa6cc" opacity="0.17"/>
<rect x="5.1" y="59.2" width="0.9" height="0.9" fill="#9aa6cc" opacity="0.17"/>
<rect x="265.3" y="46.5" width="0.9" height="0.9" fill="#9aa6cc" opacity="0.14"/>
<rect x="85.3" y="80.9" width="0.9" height="0.9" fill="#9aa6cc" opacity="0.29"/>
<rect x="200.3" y="37.9" width="0.9" height="0.9" fill="#9aa6cc" opacity="0.26"/>
<rect x="148.9" y="39.3" width="0.9" height="0.9" fill="#9aa6cc" opacity="0.11"/>
<rect x="295.1" y="84.0" width="0.9" height="0.9" fill="#9aa6cc" opacity="0.22"/>
<rect x="178.3" y="65.6" width="0.9" height="0.9" fill="#9aa6cc" opacity="0.13"/>
<rect x="366.3" y="43.5" width="0.9" height="0.9" fill="#9aa6cc" opacity="0.22"/>
<rect x="311.1" y="84.4" width="0.9" height="0.9" fill="#9aa6cc" opacity="0.18"/>
<rect x="111.9" y="66.0" width="0.9" height="0.9" fill="#9aa6cc" opacity="0.11"/>
<rect x="316.8" y="45.1" width="0.9" height="0.9" fill="#9aa6cc" opacity="0.27"/>
<rect x="101.6" y="53.3" width="0.9" height="0.9" fill="#9aa6cc" opacity="0.14"/>
<rect x="161.9" y="36.8" width="0.9" height="0.9" fill="#9aa6cc" opacity="0.08"/>
<rect x="274.3" y="40.3" width="0.9" height="0.9" fill="#9aa6cc" opacity="0.13"/>
<rect x="114.7" y="60.7" width="0.9" height="0.9" fill="#9aa6cc" opacity="0.17"/>
<rect x="242.2" y="72.2" width="0.9" height="0.9" fill="#9aa6cc" opacity="0.16"/>
<rect x="352.9" y="87.4" width="0.9" height="0.9" fill="#9aa6cc" opacity="0.09"/>
<rect x="314.6" y="92.0" width="0.9" height="0.9" fill="#9aa6cc" opacity="0.25"/>
<rect x="53.4" y="87.8" width="0.9" height="0.9" fill="#9aa6cc" opacity="0.22"/>
<rect x="5.7" y="30.5" width="0.9" height="0.9" fill="#9aa6cc" opacity="0.29"/>
<rect x="249.3" y="38.6" width="0.9" height="0.9" fill="#9aa6cc" opacity="0.10"/>
<rect x="54.2" y="44.4" width="0.9" height="0.9" fill="#9aa6cc" opacity="0.25"/>
<rect x="131.6" y="35.4" width="0.9" height="0.9" fill="#9aa6cc" opacity="0.28"/>
<rect x="300.8" y="29.9" width="0.9" height="0.9" fill="#9aa6cc" opacity="0.28"/>
<rect x="231.2" y="82.3" width="0.9" height="0.9" fill="#9aa6cc" opacity="0.23"/>
<rect x="339.7" y="81.8" width="0.9" height="0.9" fill="#9aa6cc" opacity="0.26"/>
<rect x="75.0" y="77.4" width="0.9" height="0.9" fill="#9aa6cc" opacity="0.20"/>
<rect x="281.9" y="53.2" width="0.9" height="0.9" fill="#9aa6cc" opacity="0.27"/>
<rect x="210.9" y="41.2" width="0.9" height="0.9" fill="#9aa6cc" opacity="0.13"/>
<rect x="52.9" y="63.2" width="0.9" height="0.9" fill="#9aa6cc" opacity="0.09"/>
<rect x="177.5" y="32.9" width="0.9" height="0.9" fill="#9aa6cc" opacity="0.19"/>
<rect x="189.3" y="63.6" width="0.9" height="0.9" fill="#9aa6cc" opacity="0.27"/>
<rect x="2.5" y="88.8" width="0.9" height="0.9" fill="#9aa6cc" opacity="0.18"/>
<rect x="213.8" y="73.2" width="0.9" height="0.9" fill="#9aa6cc" opacity="0.26"/>
<rect x="142.5" y="55.4" width="0.9" height="0.9" fill="#9aa6cc" opacity="0.29"/>
<rect x="28.7" y="74.1" width="0.9" height="0.9" fill="#9aa6cc" opacity="0.22"/>
<rect x="10.8" y="72.5" width="0.9" height="0.9" fill="#9aa6cc" opacity="0.23"/>
<rect x="354.0" y="41.9" width="0.9" height="0.9" fill="#9aa6cc" opacity="0.30"/>
<rect x="194.0" y="59.2" width="0.9" height="0.9" fill="#9aa6cc" opacity="0.28"/>
<rect x="12.9" y="80.1" width="0.9" height="0.9" fill="#9aa6cc" opacity="0.22"/>
<rect x="128.7" y="89.5" width="0.9" height="0.9" fill="#9aa6cc" opacity="0.16"/>
<rect x="180.3" y="62.7" width="0.9" height="0.9" fill="#9aa6cc" opacity="0.25"/>
<rect x="80.1" y="58.3" width="0.9" height="0.9" fill="#9aa6cc" opacity="0.17"/>
<rect x="210.5" y="86.1" width="0.9" height="0.9" fill="#9aa6cc" opacity="0.14"/>
<rect x="314.5" y="49.4" width="0.9" height="0.9" fill="#9aa6cc" opacity="0.19"/>
<rect x="103.2" y="63.0" width="0.9" height="0.9" fill="#9aa6cc" opacity="0.29"/>
<rect x="248.7" y="83.0" width="0.9" height="0.9" fill="#9aa6cc" opacity="0.15"/>
<rect x="120.5" y="46.9" width="0.9" height="0.9" fill="#9aa6cc" opacity="0.21"/>
<rect x="241.2" y="82.4" width="0.9" height="0.9" fill="#9aa6cc" opacity="0.09"/>
<rect x="274.6" y="90.5" width="0.9" height="0.9" fill="#9aa6cc" opacity="0.20"/>
<rect x="18.9" y="50.4" width="0.9" height="0.9" fill="#9aa6cc" opacity="0.08"/>
<rect x="72.2" y="94.2" width="0.9" height="0.9" fill="#9aa6cc" opacity="0.21"/>
<rect x="250.0" y="82.7" width="0.9" height="0.9" fill="#9aa6cc" opacity="0.28"/>
<rect x="232.5" y="68.9" width="0.9" height="0.9" fill="#9aa6cc" opacity="0.22"/>
<rect x="264.6" y="66.7" width="0.9" height="0.9" fill="#9aa6cc" opacity="0.23"/>
<rect x="80.8" y="75.4" width="0.9" height="0.9" fill="#9aa6cc" opacity="0.18"/>
<rect x="289.8" y="24.8" width="0.9" height="0.9" fill="#9aa6cc" opacity="0.12"/>
<rect x="14.1" y="84.1" width="0.9" height="0.9" fill="#9aa6cc" opacity="0.28"/>
<rect x="249.2" y="48.4" width="0.9" height="0.9" fill="#9aa6cc" opacity="0.26"/>
<rect x="298.9" y="63.1" width="0.9" height="0.9" fill="#9aa6cc" opacity="0.14"/>
<rect x="114.8" y="56.4" width="0.9" height="0.9" fill="#9aa6cc" opacity="0.15"/>
<rect x="163.7" y="72.1" width="0.9" height="0.9" fill="#9aa6cc" opacity="0.29"/>
<rect x="20.8" y="69.3" width="0.9" height="0.9" fill="#9aa6cc" opacity="0.09"/>
<rect x="45.2" y="86.3" width="0.9" height="0.9" fill="#9aa6cc" opacity="0.21"/>
<rect x="349.1" y="52.1" width="0.9" height="0.9" fill="#9aa6cc" opacity="0.08"/>
<rect x="147.1" y="68.6" width="0.9" height="0.9" fill="#9aa6cc" opacity="0.29"/>
<rect x="372.7" y="54.0" width="0.9" height="0.9" fill="#9aa6cc" opacity="0.17"/>
<rect x="38.8" y="74.5" width="0.9" height="0.9" fill="#9aa6cc" opacity="0.13"/>
<rect x="57.7" y="28.4" width="0.9" height="0.9" fill="#9aa6cc" opacity="0.08"/>
<rect x="259.8" y="27.7" width="0.9" height="0.9" fill="#9aa6cc" opacity="0.29"/>
<rect x="33.5" y="90.7" width="0.9" height="0.9" fill="#9aa6cc" opacity="0.11"/>
<rect x="6.8" y="80.3" width="0.9" height="0.9" fill="#9aa6cc" opacity="0.13"/>
<rect x="278.8" y="32.4" width="0.9" height="0.9" fill="#9aa6cc" opacity="0.09"/>
<rect x="294.1" y="76.0" width="0.9" height="0.9" fill="#9aa6cc" opacity="0.27"/>
<rect x="277.3" y="23.9" width="0.9" height="0.9" fill="#9aa6cc" opacity="0.22"/>
<rect x="269.5" y="55.4" width="0.9" height="0.9" fill="#9aa6cc" opacity="0.29"/>
<rect x="96.5" y="97.3" width="0.9" height="0.9" fill="#9aa6cc" opacity="0.24"/>
<rect x="4.3" y="30.8" width="0.9" height="0.9" fill="#9aa6cc" opacity="0.22"/>
<rect x="310.6" y="22.0" width="0.9" height="0.9" fill="#9aa6cc" opacity="0.15"/>
<rect x="277.2" y="30.7" width="0.9" height="0.9" fill="#9aa6cc" opacity="0.27"/>
<rect x="184.8" y="26.0" width="0.9" height="0.9" fill="#9aa6cc" opacity="0.16"/>
<rect x="218.5" y="54.9" width="0.9" height="0.9" fill="#9aa6cc" opacity="0.23"/>
<rect x="55.1" y="85.3" width="0.9" height="0.9" fill="#9aa6cc" opacity="0.16"/>
<rect x="245.1" y="69.8" width="0.9" height="0.9" fill="#9aa6cc" opacity="0.17"/>
<rect x="146.6" y="83.6" width="0.9" height="0.9" fill="#9aa6cc" opacity="0.29"/>
<rect x="298.2" y="63.6" width="0.9" height="0.9" fill="#9aa6cc" opacity="0.14"/>
<rect x="23.0" y="98.1" width="0.9" height="0.9" fill="#9aa6cc" opacity="0.23"/>
<rect x="314.4" y="43.3" width="0.9" height="0.9" fill="#9aa6cc" opacity="0.21"/>
<rect x="371.4" y="85.2" width="0.9" height="0.9" fill="#9aa6cc" opacity="0.21"/>
<rect x="117.3" y="56.8" width="0.9" height="0.9" fill="#9aa6cc" opacity="0.28"/>
<rect x="143.1" y="75.8" width="0.9" height="0.9" fill="#9aa6cc" opacity="0.21"/>
<rect x="340.5" y="83.4" width="0.9" height="0.9" fill="#9aa6cc" opacity="0.14"/>
<rect x="0.6" y="48.4" width="0.9" height="0.9" fill="#9aa6cc" opacity="0.17"/>
<rect x="222.9" y="85.2" width="0.9" height="0.9" fill="#9aa6cc" opacity="0.28"/>
<rect x="16.1" y="88.2" width="0.9" height="0.9" fill="#9aa6cc" opacity="0.26"/>
<rect x="329.5" y="63.4" width="0.9" height="0.9" fill="#9aa6cc" opacity="0.14"/>
<rect x="323.4" y="83.5" width="0.9" height="0.9" fill="#9aa6cc" opacity="0.23"/>
<rect x="347.2" y="43.5" width="0.9" height="0.9" fill="#9aa6cc" opacity="0.10"/>
<rect x="210.4" y="83.8" width="0.9" height="0.9" fill="#9aa6cc" opacity="0.12"/>
<rect x="285.1" y="94.3" width="0.9" height="0.9" fill="#9aa6cc" opacity="0.13"/>
<rect x="230.6" y="73.9" width="0.9" height="0.9" fill="#9aa6cc" opacity="0.18"/>
<rect x="78.5" y="45.1" width="0.9" height="0.9" fill="#9aa6cc" opacity="0.25"/>
<rect x="300.8" y="54.5" width="0.9" height="0.9" fill="#9aa6cc" opacity="0.10"/>
<rect x="306.5" y="80.7" width="0.9" height="0.9" fill="#9aa6cc" opacity="0.13"/>
<rect x="220.2" y="91.7" width="0.9" height="0.9" fill="#9aa6cc" opacity="0.27"/>
<rect x="198.3" y="58.4" width="0.9" height="0.9" fill="#9aa6cc" opacity="0.21"/>
<rect x="71.9" y="40.7" width="0.9" height="0.9" fill="#9aa6cc" opacity="0.12"/>
<rect x="266.4" y="47.4" width="0.9" height="0.9" fill="#9aa6cc" opacity="0.20"/>
<rect x="152.9" y="62.7" width="0.9" height="0.9" fill="#9aa6cc" opacity="0.11"/>
<rect x="16.9" y="99.8" width="0.9" height="0.9" fill="#9aa6cc" opacity="0.16"/>
<rect x="40.3" y="73.6" width="0.9" height="0.9" fill="#9aa6cc" opacity="0.25"/>
<rect x="59.3" y="70.7" width="0.9" height="0.9" fill="#9aa6cc" opacity="0.16"/>
<rect x="197.4" y="22.3" width="0.9" height="0.9" fill="#9aa6cc" opacity="0.09"/>
<rect x="376.4" y="88.2" width="0.9" height="0.9" fill="#9aa6cc" opacity="0.19"/>
<rect x="215.5" y="40.8" width="0.9" height="0.9" fill="#9aa6cc" opacity="0.25"/>
<rect x="161.9" y="95.8" width="0.9" height="0.9" fill="#9aa6cc" opacity="0.25"/>
<rect x="311.2" y="96.9" width="0.9" height="0.9" fill="#9aa6cc" opacity="0.14"/>
<rect x="14.4" y="43.5" width="0.9" height="0.9" fill="#9aa6cc" opacity="0.12"/>
<rect x="31.8" y="32.1" width="0.9" height="0.9" fill="#9aa6cc" opacity="0.20"/>
<rect x="330.9" y="53.6" width="0.9" height="0.9" fill="#9aa6cc" opacity="0.29"/>
<rect x="345.8" y="19.2" width="0.9" height="0.9" fill="#9aa6cc" opacity="0.21"/>
<rect x="151.0" y="32.1" width="0.9" height="0.9" fill="#9aa6cc" opacity="0.29"/>
<rect x="97.7" y="67.5" width="0.9" height="0.9" fill="#9aa6cc" opacity="0.22"/>
<rect x="363.4" y="71.2" width="0.9" height="0.9" fill="#9aa6cc" opacity="0.17"/>
<rect x="170.4" y="34.4" width="0.9" height="0.9" fill="#9aa6cc" opacity="0.29"/>
<rect x="376.9" y="31.6" width="0.9" height="0.9" fill="#9aa6cc" opacity="0.09"/>
<rect x="97.2" y="51.7" width="0.9" height="0.9" fill="#9aa6cc" opacity="0.28"/>
<rect x="343.7" y="86.0" width="0.9" height="0.9" fill="#9aa6cc" opacity="0.09"/>
<rect x="298.8" y="75.6" width="0.9" height="0.9" fill="#9aa6cc" opacity="0.22"/>
<rect x="374.5" y="17.2" width="0.9" height="0.9" fill="#9aa6cc" opacity="0.11"/>
<rect x="286.9" y="94.9" width="0.9" height="0.9" fill="#9aa6cc" opacity="0.23"/>
<rect x="113.5" y="69.2" width="0.9" height="0.9" fill="#9aa6cc" opacity="0.25"/>
<rect x="40.1" y="51.4" width="0.9" height="0.9" fill="#9aa6cc" opacity="0.14"/>
<rect x="47.2" y="62.5" width="0.9" height="0.9" fill="#9aa6cc" opacity="0.12"/>
<rect x="90.6" y="36.3" width="0.9" height="0.9" fill="#9aa6cc" opacity="0.23"/>
<rect x="4.8" y="80.1" width="0.9" height="0.9" fill="#9aa6cc" opacity="0.12"/>
<rect x="13.7" y="94.9" width="0.9" height="0.9" fill="#9aa6cc" opacity="0.13"/>
<rect x="354.9" y="88.4" width="0.9" height="0.9" fill="#9aa6cc" opacity="0.28"/>
<rect x="53.1" y="59.9" width="0.9" height="0.9" fill="#9aa6cc" opacity="0.10"/>
<rect x="352.9" y="86.3" width="0.9" height="0.9" fill="#9aa6cc" opacity="0.22"/>
<rect x="171.9" y="48.4" width="0.9" height="0.9" fill="#9aa6cc" opacity="0.26"/>
<rect x="181.5" y="70.8" width="0.9" height="0.9" fill="#9aa6cc" opacity="0.11"/>
<rect x="84.2" y="30.2" width="0.9" height="0.9" fill="#9aa6cc" opacity="0.24"/>
<rect x="210.3" y="31.6" width="0.9" height="0.9" fill="#9aa6cc" opacity="0.27"/>
<rect x="101.2" y="56.0" width="0.9" height="0.9" fill="#9aa6cc" opacity="0.11"/>
<rect x="103.0" y="88.0" width="0.9" height="0.9" fill="#9aa6cc" opacity="0.15"/>
<rect x="63.8" y="62.8" width="0.9" height="0.9" fill="#9aa6cc" opacity="0.15"/>
<rect x="343.2" y="23.6" width="0.9" height="0.9" fill="#9aa6cc" opacity="0.30"/>
<rect x="21.6" y="92.5" width="0.9" height="0.9" fill="#9aa6cc" opacity="0.23"/>
<rect x="80.2" y="61.4" width="0.9" height="0.9" fill="#9aa6cc" opacity="0.14"/>
<rect x="98.0" y="40.4" width="0.9" height="0.9" fill="#9aa6cc" opacity="0.16"/>
<rect x="376.6" y="99.8" width="0.9" height="0.9" fill="#9aa6cc" opacity="0.28"/>
<rect x="37.1" y="49.0" width="0.9" height="0.9" fill="#9aa6cc" opacity="0.28"/>
<rect x="21.8" y="80.6" width="0.9" height="0.9" fill="#9aa6cc" opacity="0.14"/>
<rect x="371.9" y="13.8" width="0.9" height="0.9" fill="#9aa6cc" opacity="0.26"/>
<rect x="129.5" y="34.5" width="0.9" height="0.9" fill="#9aa6cc" opacity="0.08"/>
<rect x="316.3" y="59.8" width="0.9" height="0.9" fill="#9aa6cc" opacity="0.12"/>
<rect x="165.4" y="93.1" width="0.9" height="0.9" fill="#9aa6cc" opacity="0.13"/>
<rect x="217.1" y="30.8" width="0.9" height="0.9" fill="#9aa6cc" opacity="0.12"/>
<rect x="292.8" y="75.8" width="0.9" height="0.9" fill="#9aa6cc" opacity="0.12"/>
<rect x="30.1" y="34.8" width="0.9" height="0.9" fill="#9aa6cc" opacity="0.21"/>
<rect x="188.3" y="42.7" width="0.9" height="0.9" fill="#9aa6cc" opacity="0.13"/>
<rect x="232.7" y="76.3" width="0.9" height="0.9" fill="#9aa6cc" opacity="0.26"/>
<rect x="221.5" y="35.8" width="0.9" height="0.9" fill="#9aa6cc" opacity="0.09"/>
<rect x="278.4" y="50.8" width="0.9" height="0.9" fill="#9aa6cc" opacity="0.24"/>
<rect x="21.0" y="86.6" width="0.9" height="0.9" fill="#9aa6cc" opacity="0.15"/>
<rect x="319.9" y="88.5" width="0.9" height="0.9" fill="#9aa6cc" opacity="0.19"/>
<rect x="5.9" y="93.7" width="0.9" height="0.9" fill="#9aa6cc" opacity="0.18"/>
<rect x="331.4" y="37.1" width="0.9" height="0.9" fill="#9aa6cc" opacity="0.12"/>
<rect x="316.0" y="46.2" width="0.9" height="0.9" fill="#9aa6cc" opacity="0.12"/>
<rect x="141.0" y="68.9" width="0.9" height="0.9" fill="#9aa6cc" opacity="0.08"/>
<rect x="197.5" y="56.0" width="0.9" height="0.9" fill="#9aa6cc" opacity="0.19"/>
<rect x="45.9" y="79.4" width="0.9" height="0.9" fill="#9aa6cc" opacity="0.26"/>
<rect x="328.9" y="41.9" width="0.9" height="0.9" fill="#9aa6cc" opacity="0.24"/>
<rect x="144.9" y="80.9" width="0.9" height="0.9" fill="#9aa6cc" opacity="0.09"/>
<rect x="331.7" y="96.1" width="0.9" height="0.9" fill="#9aa6cc" opacity="0.19"/>
<rect x="195.1" y="62.8" width="0.9" height="0.9" fill="#9aa6cc" opacity="0.20"/>
<rect x="7.9" y="97.7" width="0.9" height="0.9" fill="#9aa6cc" opacity="0.13"/>
<rect x="69.3" y="34.2" width="0.9" height="0.9" fill="#9aa6cc" opacity="0.14"/>
<rect x="310.5" y="17.8" width="0.9" height="0.9" fill="#9aa6cc" opacity="0.10"/>
<rect x="265.6" y="33.5" width="0.9" height="0.9" fill="#9aa6cc" opacity="0.08"/>
<rect x="227.8" y="65.8" width="0.9" height="0.9" fill="#9aa6cc" opacity="0.20"/>
<rect x="267.0" y="25.9" width="0.9" height="0.9" fill="#9aa6cc" opacity="0.27"/>
<rect x="272.5" y="20.8" width="0.9" height="0.9" fill="#9aa6cc" opacity="0.11"/>
<rect x="187.6" y="60.6" width="0.9" height="0.9" fill="#9aa6cc" opacity="0.14"/>
<rect x="46.4" y="57.1" width="0.9" height="0.9" fill="#9aa6cc" opacity="0.11"/>
<rect x="224.9" y="88.8" width="0.9" height="0.9" fill="#9aa6cc" opacity="0.11"/>
<rect x="217.7" y="79.6" width="0.9" height="0.9" fill="#9aa6cc" opacity="0.12"/>
<rect x="313.9" y="94.7" width="0.9" height="0.9" fill="#9aa6cc" opacity="0.17"/>
<rect x="159.8" y="87.6" width="0.9" height="0.9" fill="#9aa6cc" opacity="0.20"/>
<rect x="150.3" y="95.5" width="0.9" height="0.9" fill="#9aa6cc" opacity="0.25"/>
<rect x="128.6" y="42.2" width="0.9" height="0.9" fill="#9aa6cc" opacity="0.15"/>
<rect x="165.5" y="98.5" width="0.9" height="0.9" fill="#9aa6cc" opacity="0.26"/>
<rect x="346.9" y="84.0" width="0.9" height="0.9" fill="#9aa6cc" opacity="0.27"/>
<rect x="20.4" y="65.8" width="0.9" height="0.9" fill="#9aa6cc" opacity="0.29"/>
<rect x="355.0" y="34.8" width="0.9" height="0.9" fill="#9aa6cc" opacity="0.17"/>
<rect x="240.4" y="48.3" width="0.9" height="0.9" fill="#9aa6cc" opacity="0.20"/>
<rect x="26.3" y="59.6" width="0.9" height="0.9" fill="#9aa6cc" opacity="0.19"/>
<rect x="7.9" y="39.4" width="0.9" height="0.9" fill="#9aa6cc" opacity="0.29"/>
<rect x="295.1" y="94.7" width="0.9" height="0.9" fill="#9aa6cc" opacity="0.22"/>
<rect x="307.5" y="90.2" width="0.9" height="0.9" fill="#9aa6cc" opacity="0.27"/>
<rect x="13.1" y="74.7" width="0.9" height="0.9" fill="#9aa6cc" opacity="0.14"/>
<rect x="257.8" y="40.3" width="0.9" height="0.9" fill="#9aa6cc" opacity="0.20"/>
<rect x="351.3" y="67.2" width="0.9" height="0.9" fill="#9aa6cc" opacity="0.14"/>
<rect x="197.7" y="55.1" width="0.9" height="0.9" fill="#9aa6cc" opacity="0.29"/>
<rect x="109.3" y="47.8" width="0.9" height="0.9" fill="#9aa6cc" opacity="0.22"/>
<rect x="45.7" y="70.7" width="0.9" height="0.9" fill="#9aa6cc" opacity="0.29"/>
<rect x="195.2" y="42.0" width="0.9" height="0.9" fill="#9aa6cc" opacity="0.18"/>
<rect x="202.9" y="32.2" width="0.9" height="0.9" fill="#9aa6cc" opacity="0.11"/>
<rect x="49.9" y="48.9" width="0.9" height="0.9" fill="#9aa6cc" opacity="0.17"/>
<rect x="109.6" y="43.1" width="0.9" height="0.9" fill="#9aa6cc" opacity="0.10"/>
<rect x="207.6" y="87.2" width="0.9" height="0.9" fill="#9aa6cc" opacity="0.21"/>
<rect x="216.7" y="71.9" width="0.9" height="0.9" fill="#9aa6cc" opacity="0.12"/>
<rect x="269.9" y="55.4" width="0.9" height="0.9" fill="#9aa6cc" opacity="0.20"/>
<rect x="232.9" y="57.0" width="0.9" height="0.9" fill="#9aa6cc" opacity="0.15"/>
<rect x="92.1" y="42.1" width="0.9" height="0.9" fill="#9aa6cc" opacity="0.19"/>
<rect x="145.6" y="68.1" width="0.9" height="0.9" fill="#9aa6cc" opacity="0.08"/>
<rect x="134.0" y="89.5" width="0.9" height="0.9" fill="#9aa6cc" opacity="0.13"/>
<rect x="211.5" y="59.3" width="0.9" height="0.9" fill="#9aa6cc" opacity="0.14"/>
<rect x="375.3" y="38.2" width="0.9" height="0.9" fill="#9aa6cc" opacity="0.25"/>
<rect x="60.3" y="32.0" width="0.9" height="0.9" fill="#9aa6cc" opacity="0.27"/>
<rect x="167.2" y="26.9" width="0.9" height="0.9" fill="#9aa6cc" opacity="0.17"/>
<rect x="167.2" y="79.4" width="0.9" height="0.9" fill="#9aa6cc" opacity="0.10"/>
<rect x="85.6" y="97.0" width="0.9" height="0.9" fill="#9aa6cc" opacity="0.24"/>
<rect x="58.7" y="51.7" width="0.9" height="0.9" fill="#9aa6cc" opacity="0.16"/>
<rect x="256.6" y="68.5" width="0.9" height="0.9" fill="#9aa6cc" opacity="0.27"/>
<rect x="312.1" y="59.1" width="0.9" height="0.9" fill="#9aa6cc" opacity="0.24"/>
<rect x="282.4" y="80.0" width="0.9" height="0.9" fill="#9aa6cc" opacity="0.18"/>
<rect x="298.3" y="75.5" width="0.9" height="0.9" fill="#9aa6cc" opacity="0.28"/>
<rect x="48.4" y="90.7" width="0.9" height="0.9" fill="#9aa6cc" opacity="0.08"/>
<rect x="291.0" y="65.3" width="0.9" height="0.9" fill="#9aa6cc" opacity="0.19"/>
<rect x="365.8" y="62.6" width="0.9" height="0.9" fill="#9aa6cc" opacity="0.17"/>
<rect x="297.8" y="89.3" width="0.9" height="0.9" fill="#9aa6cc" opacity="0.21"/>
<rect x="144.2" y="57.9" width="0.9" height="0.9" fill="#9aa6cc" opacity="0.18"/>
<rect x="274.8" y="41.3" width="0.9" height="0.9" fill="#9aa6cc" opacity="0.17"/>
<rect x="211.0" y="50.8" width="0.9" height="0.9" fill="#9aa6cc" opacity="0.15"/>
<rect x="299.1" y="87.3" width="0.9" height="0.9" fill="#9aa6cc" opacity="0.19"/>
<rect x="168.7" y="36.4" width="0.9" height="0.9" fill="#9aa6cc" opacity="0.15"/>
<rect x="55.1" y="69.2" width="0.9" height="0.9" fill="#9aa6cc" opacity="0.21"/>
<rect x="33.4" y="94.3" width="0.9" height="0.9" fill="#9aa6cc" opacity="0.15"/>
<rect x="320.5" y="86.2" width="0.9" height="0.9" fill="#9aa6cc" opacity="0.29"/>
<rect x="77.6" y="57.7" width="0.9" height="0.9" fill="#9aa6cc" opacity="0.28"/>
<rect x="4.1" y="33.1" width="0.9" height="0.9" fill="#9aa6cc" opacity="0.20"/>
<rect x="189.0" y="93.7" width="0.9" height="0.9" fill="#9aa6cc" opacity="0.25"/>
<rect x="204.6" y="99.9" width="0.9" height="0.9" fill="#9aa6cc" opacity="0.19"/>
<rect x="196.6" y="75.0" width="0.9" height="0.9" fill="#9aa6cc" opacity="0.17"/>
<rect x="135.9" y="69.0" width="0.9" height="0.9" fill="#9aa6cc" opacity="0.16"/>
<rect x="360.2" y="71.8" width="0.9" height="0.9" fill="#9aa6cc" opacity="0.20"/>
<rect x="37.6" y="55.1" width="0.9" height="0.9" fill="#9aa6cc" opacity="0.17"/>
<rect x="213.3" y="65.9" width="0.9" height="0.9" fill="#9aa6cc" opacity="0.27"/>
<rect x="366.5" y="55.2" width="0.9" height="0.9" fill="#9aa6cc" opacity="0.18"/>
<rect x="237.3" y="99.7" width="0.9" height="0.9" fill="#9aa6cc" opacity="0.16"/>
<rect x="201.5" y="85.4" width="0.9" height="0.9" fill="#9aa6cc" opacity="0.12"/>
<rect x="120.9" y="98.4" width="0.9" height="0.9" fill="#9aa6cc" opacity="0.26"/>
<rect x="194.8" y="29.5" width="0.9" height="0.9" fill="#9aa6cc" opacity="0.28"/>
<rect x="262.2" y="85.2" width="0.9" height="0.9" fill="#9aa6cc" opacity="0.30"/>
<rect x="337.5" y="50.2" width="0.9" height="0.9" fill="#9aa6cc" opacity="0.11"/>
<rect x="110.2" y="63.3" width="0.9" height="0.9" fill="#9aa6cc" opacity="0.19"/>
<rect x="71.5" y="40.0" width="0.9" height="0.9" fill="#9aa6cc" opacity="0.22"/>
<rect x="229.2" y="47.7" width="0.9" height="0.9" fill="#9aa6cc" opacity="0.30"/>
<rect x="241.9" y="22.0" width="0.9" height="0.9" fill="#9aa6cc" opacity="0.17"/>
<rect x="299.3" y="41.6" width="0.9" height="0.9" fill="#9aa6cc" opacity="0.23"/>
<rect x="1.5" y="51.3" width="0.9" height="0.9" fill="#9aa6cc" opacity="0.27"/>
<rect x="222.8" y="73.3" width="0.9" height="0.9" fill="#9aa6cc" opacity="0.12"/>
<rect x="189.2" y="64.7" width="0.9" height="0.9" fill="#9aa6cc" opacity="0.14"/>
<rect x="245.8" y="61.7" width="0.9" height="0.9" fill="#9aa6cc" opacity="0.30"/>
<rect x="218.3" y="52.7" width="0.9" height="0.9" fill="#9aa6cc" opacity="0.11"/>
<rect x="59.6" y="82.5" width="0.9" height="0.9" fill="#9aa6cc" opacity="0.10"/>
<rect x="38.0" y="40.4" width="0.9" height="0.9" fill="#9aa6cc" opacity="0.19"/>
<rect x="312.8" y="67.2" width="0.9" height="0.9" fill="#9aa6cc" opacity="0.26"/>
<rect x="23.6" y="29.8" width="0.9" height="0.9" fill="#9aa6cc" opacity="0.25"/>
<rect x="122.7" y="78.4" width="0.9" height="0.9" fill="#9aa6cc" opacity="0.16"/>
<rect x="64.4" y="46.4" width="0.9" height="0.9" fill="#9aa6cc" opacity="0.10"/>
<rect x="343.5" y="64.0" width="0.9" height="0.9" fill="#9aa6cc" opacity="0.16"/>
<rect x="170.9" y="52.0" width="0.9" height="0.9" fill="#9aa6cc" opacity="0.09"/>
<rect x="338.4" y="64.1" width="0.9" height="0.9" fill="#9aa6cc" opacity="0.29"/>
<rect x="167.1" y="70.4" width="0.9" height="0.9" fill="#9aa6cc" opacity="0.13"/>
<rect x="16.7" y="95.1" width="0.9" height="0.9" fill="#9aa6cc" opacity="0.27"/>
<rect x="119.6" y="92.3" width="0.9" height="0.9" fill="#9aa6cc" opacity="0.26"/>
<rect x="115.4" y="70.0" width="0.9" height="0.9" fill="#9aa6cc" opacity="0.29"/>
<rect x="188.3" y="96.0" width="0.9" height="0.9" fill="#9aa6cc" opacity="0.13"/>
<rect x="148.1" y="78.3" width="0.9" height="0.9" fill="#9aa6cc" opacity="0.13"/>
<rect x="117.5" y="90.6" width="0.9" height="0.9" fill="#9aa6cc" opacity="0.19"/>
<rect x="301.2" y="36.2" width="0.9" height="0.9" fill="#9aa6cc" opacity="0.12"/>
<rect x="136.2" y="37.8" width="0.9" height="0.9" fill="#9aa6cc" opacity="0.29"/>
<rect x="110.5" y="67.0" width="0.9" height="0.9" fill="#9aa6cc" opacity="0.11"/>
<rect x="202.8" y="51.1" width="0.9" height="0.9" fill="#9aa6cc" opacity="0.17"/>
<rect x="24.9" y="37.6" width="0.9" height="0.9" fill="#9aa6cc" opacity="0.26"/>
<rect x="133.5" y="42.4" width="0.9" height="0.9" fill="#9aa6cc" opacity="0.12"/>
<rect x="107.8" y="42.7" width="0.9" height="0.9" fill="#9aa6cc" opacity="0.09"/>
<rect x="252.4" y="46.0" width="0.9" height="0.9" fill="#9aa6cc" opacity="0.11"/>
<rect x="268.2" y="25.0" width="0.9" height="0.9" fill="#9aa6cc" opacity="0.14"/>
<rect x="317.3" y="25.8" width="0.9" height="0.9" fill="#9aa6cc" opacity="0.18"/>
<rect x="317.8" y="83.4" width="0.9" height="0.9" fill="#9aa6cc" opacity="0.12"/>
<rect x="134.1" y="78.8" width="0.9" height="0.9" fill="#9aa6cc" opacity="0.16"/>
<rect x="364.2" y="30.9" width="0.9" height="0.9" fill="#9aa6cc" opacity="0.29"/>
<rect x="191.8" y="38.9" width="0.9" height="0.9" fill="#9aa6cc" opacity="0.18"/>
<rect x="49.8" y="78.8" width="0.9" height="0.9" fill="#9aa6cc" opacity="0.14"/>
<rect x="341.9" y="64.5" width="0.9" height="0.9" fill="#9aa6cc" opacity="0.16"/>
<rect x="93.6" y="70.8" width="0.9" height="0.9" fill="#9aa6cc" opacity="0.13"/>
<rect x="331.5" y="24.8" width="0.9" height="0.9" fill="#9aa6cc" opacity="0.19"/>
<rect x="206.2" y="41.8" width="0.9" height="0.9" fill="#9aa6cc" opacity="0.25"/>
<rect x="146.2" y="73.7" width="0.9" height="0.9" fill="#9aa6cc" opacity="0.20"/>
<rect x="118.1" y="53.9" width="0.9" height="0.9" fill="#9aa6cc" opacity="0.10"/>
<rect x="67.3" y="89.1" width="0.9" height="0.9" fill="#9aa6cc" opacity="0.15"/>
<rect x="251.8" y="27.0" width="0.9" height="0.9" fill="#9aa6cc" opacity="0.20"/>
<rect x="137.4" y="61.8" width="0.9" height="0.9" fill="#9aa6cc" opacity="0.15"/>
<rect x="25.0" y="51.0" width="0.9" height="0.9" fill="#9aa6cc" opacity="0.13"/>
<rect x="47.9" y="79.5" width="0.9" height="0.9" fill="#9aa6cc" opacity="0.14"/>
<rect x="153.3" y="93.0" width="0.9" height="0.9" fill="#9aa6cc" opacity="0.25"/>
<rect x="335.4" y="88.1" width="0.9" height="0.9" fill="#9aa6cc" opacity="0.11"/>
<rect x="105.1" y="27.2" width="0.9" height="0.9" fill="#9aa6cc" opacity="0.23"/>
<rect x="252.2" y="46.9" width="0.9" height="0.9" fill="#9aa6cc" opacity="0.17"/>
<rect x="250.4" y="75.4" width="0.9" height="0.9" fill="#9aa6cc" opacity="0.13"/>
<rect x="321.8" y="44.8" width="0.9" height="0.9" fill="#9aa6cc" opacity="0.22"/>
<rect x="69.0" y="35.2" width="0.9" height="0.9" fill="#9aa6cc" opacity="0.28"/>
<rect x="278.9" y="76.1" width="0.9" height="0.9" fill="#9aa6cc" opacity="0.09"/>
<rect x="15.2" y="40.7" width="0.9" height="0.9" fill="#9aa6cc" opacity="0.12"/>
<rect x="115.2" y="53.3" width="0.9" height="0.9" fill="#9aa6cc" opacity="0.09"/>
<rect x="118.1" y="72.7" width="0.9" height="0.9" fill="#9aa6cc" opacity="0.12"/>
<rect x="319.0" y="63.4" width="0.9" height="0.9" fill="#9aa6cc" opacity="0.24"/>
<rect x="96.8" y="57.9" width="0.9" height="0.9" fill="#9aa6cc" opacity="0.23"/>
<rect x="132.6" y="23.8" width="0.9" height="0.9" fill="#9aa6cc" opacity="0.26"/>
<rect x="295.1" y="40.1" width="0.9" height="0.9" fill="#9aa6cc" opacity="0.09"/>
<rect x="324.6" y="66.5" width="0.9" height="0.9" fill="#9aa6cc" opacity="0.09"/>
<rect x="92.9" y="33.9" width="0.9" height="0.9" fill="#9aa6cc" opacity="0.25"/>
<rect x="79.9" y="93.7" width="0.9" height="0.9" fill="#9aa6cc" opacity="0.24"/>
<rect x="32.7" y="78.2" width="0.9" height="0.9" fill="#9aa6cc" opacity="0.17"/>
<rect x="284.1" y="85.7" width="0.9" height="0.9" fill="#9aa6cc" opacity="0.14"/>
<rect x="34.2" y="96.2" width="0.9" height="0.9" fill="#9aa6cc" opacity="0.17"/>
<rect x="353.5" y="73.3" width="0.9" height="0.9" fill="#9aa6cc" opacity="0.24"/>
<rect x="315.4" y="68.4" width="0.9" height="0.9" fill="#9aa6cc" opacity="0.18"/>
<rect x="20.6" y="78.6" width="0.9" height="0.9" fill="#9aa6cc" opacity="0.17"/>
<rect x="194.5" y="94.3" width="0.9" height="0.9" fill="#9aa6cc" opacity="0.11"/>
<rect x="289.5" y="19.9" width="0.9" height="0.9" fill="#9aa6cc" opacity="0.23"/>
<rect x="306.2" y="37.6" width="0.9" height="0.9" fill="#9aa6cc" opacity="0.20"/>
<rect x="368.4" y="68.3" width="0.9" height="0.9" fill="#9aa6cc" opacity="0.20"/>
<rect x="94.9" y="29.9" width="0.9" height="0.9" fill="#9aa6cc" opacity="0.16"/>
<rect x="156.4" y="38.2" width="0.9" height="0.9" fill="#9aa6cc" opacity="0.15"/>
<rect x="51.9" y="78.8" width="0.9" height="0.9" fill="#9aa6cc" opacity="0.23"/>
<rect x="90.4" y="43.7" width="0.9" height="0.9" fill="#9aa6cc" opacity="0.19"/>
<rect x="169.1" y="95.0" width="0.9" height="0.9" fill="#9aa6cc" opacity="0.16"/>
<rect x="113.8" y="91.3" width="0.9" height="0.9" fill="#9aa6cc" opacity="0.11"/>
<rect x="214.0" y="46.6" width="0.9" height="0.9" fill="#9aa6cc" opacity="0.26"/>
<rect x="208.3" y="80.9" width="0.9" height="0.9" fill="#9aa6cc" opacity="0.12"/>
<rect x="253.3" y="67.1" width="0.9" height="0.9" fill="#9aa6cc" opacity="0.18"/>
<rect x="291.1" y="85.9" width="0.9" height="0.9" fill="#9aa6cc" opacity="0.11"/>
<rect x="109.9" y="51.9" width="0.9" height="0.9" fill="#9aa6cc" opacity="0.13"/>
<rect x="22.9" y="48.9" width="0.9" height="0.9" fill="#9aa6cc" opacity="0.12"/>
<rect x="266.6" y="54.4" width="0.9" height="0.9" fill="#9aa6cc" opacity="0.10"/>
<rect x="123.3" y="59.7" width="0.9" height="0.9" fill="#9aa6cc" opacity="0.16"/>
<rect x="63.9" y="32.2" width="0.9" height="0.9" fill="#9aa6cc" opacity="0.08"/>
<rect x="377.0" y="78.1" width="0.9" height="0.9" fill="#9aa6cc" opacity="0.10"/>
<rect x="272.5" y="98.4" width="0.9" height="0.9" fill="#9aa6cc" opacity="0.20"/>
<rect x="41.3" y="63.2" width="0.9" height="0.9" fill="#9aa6cc" opacity="0.18"/>
<rect x="72.1" y="66.5" width="0.9" height="0.9" fill="#9aa6cc" opacity="0.08"/>
<rect x="349.4" y="69.2" width="0.9" height="0.9" fill="#9aa6cc" opacity="0.22"/>
<rect x="355.4" y="69.8" width="0.9" height="0.9" fill="#9aa6cc" opacity="0.14"/>
<rect x="93.5" y="35.9" width="0.9" height="0.9" fill="#9aa6cc" opacity="0.09"/>
<rect x="294.3" y="86.5" width="0.9" height="0.9" fill="#9aa6cc" opacity="0.15"/>
<rect x="70.6" y="73.5" width="0.9" height="0.9" fill="#9aa6cc" opacity="0.27"/>
<rect x="352.1" y="27.9" width="0.9" height="0.9" fill="#9aa6cc" opacity="0.25"/>
<rect x="315.5" y="78.1" width="0.9" height="0.9" fill="#9aa6cc" opacity="0.15"/>
<rect x="70.1" y="87.2" width="0.9" height="0.9" fill="#9aa6cc" opacity="0.15"/>
<rect x="140.0" y="65.6" width="0.9" height="0.9" fill="#9aa6cc" opacity="0.16"/>
<rect x="315.9" y="35.4" width="0.9" height="0.9" fill="#9aa6cc" opacity="0.09"/>
<rect x="215.4" y="70.2" width="0.9" height="0.9" fill="#9aa6cc" opacity="0.26"/>
<rect x="268.1" y="92.2" width="0.9" height="0.9" fill="#9aa6cc" opacity="0.29"/>
<rect x="187.9" y="60.5" width="0.9" height="0.9" fill="#9aa6cc" opacity="0.11"/>
<rect x="113.8" y="68.4" width="0.9" height="0.9" fill="#9aa6cc" opacity="0.10"/>
<rect x="261.4" y="31.1" width="0.9" height="0.9" fill="#9aa6cc" opacity="0.18"/>
<rect x="368.5" y="20.4" width="0.9" height="0.9" fill="#9aa6cc" opacity="0.09"/>
<rect x="167.0" y="37.0" width="0.9" height="0.9" fill="#9aa6cc" opacity="0.24"/>
<rect x="1.1" y="88.8" width="0.9" height="0.9" fill="#9aa6cc" opacity="0.27"/>
<rect x="299.0" y="51.6" width="0.9" height="0.9" fill="#9aa6cc" opacity="0.14"/>
<rect x="251.4" y="60.2" width="0.9" height="0.9" fill="#9aa6cc" opacity="0.17"/>
<rect x="128.7" y="57.3" width="0.9" height="0.9" fill="#9aa6cc" opacity="0.23"/>
<rect x="313.9" y="91.9" width="0.9" height="0.9" fill="#9aa6cc" opacity="0.12"/>
<rect x="112.4" y="58.1" width="0.9" height="0.9" fill="#9aa6cc" opacity="0.20"/>
<rect x="132.3" y="38.6" width="0.9" height="0.9" fill="#9aa6cc" opacity="0.10"/>
<rect x="123.0" y="59.1" width="0.9" height="0.9" fill="#9aa6cc" opacity="0.29"/>
<rect x="345.3" y="88.4" width="0.9" height="0.9" fill="#9aa6cc" opacity="0.29"/>
<rect x="365.5" y="66.8" width="0.9" height="0.9" fill="#9aa6cc" opacity="0.26"/>
<rect x="22.8" y="77.0" width="0.9" height="0.9" fill="#9aa6cc" opacity="0.21"/>
<rect x="112.9" y="67.7" width="0.9" height="0.9" fill="#9aa6cc" opacity="0.29"/>
<rect x="182.7" y="72.3" width="0.9" height="0.9" fill="#9aa6cc" opacity="0.15"/>
<rect x="130.5" y="91.2" width="0.9" height="0.9" fill="#9aa6cc" opacity="0.09"/>
<rect x="71.8" y="76.4" width="0.9" height="0.9" fill="#9aa6cc" opacity="0.18"/>
<rect x="32.4" y="75.7" width="0.9" height="0.9" fill="#9aa6cc" opacity="0.16"/>
<rect x="220.7" y="53.0" width="0.9" height="0.9" fill="#9aa6cc" opacity="0.20"/>
<rect x="214.6" y="51.6" width="0.9" height="0.9" fill="#9aa6cc" opacity="0.11"/>
<rect x="68.6" y="91.9" width="0.9" height="0.9" fill="#9aa6cc" opacity="0.20"/>
<rect x="42.7" y="90.1" width="0.9" height="0.9" fill="#9aa6cc" opacity="0.14"/>
<rect x="36.1" y="66.4" width="0.9" height="0.9" fill="#9aa6cc" opacity="0.14"/>
<rect x="185.9" y="64.9" width="0.9" height="0.9" fill="#9aa6cc" opacity="0.13"/>
<rect x="217.6" y="28.8" width="0.9" height="0.9" fill="#9aa6cc" opacity="0.19"/>
<rect x="223.6" y="25.9" width="0.9" height="0.9" fill="#9aa6cc" opacity="0.17"/>
<rect x="27.9" y="60.0" width="0.9" height="0.9" fill="#9aa6cc" opacity="0.27"/>
<rect x="209.2" y="77.2" width="0.9" height="0.9" fill="#9aa6cc" opacity="0.25"/>
<rect x="43.6" y="99.3" width="0.9" height="0.9" fill="#9aa6cc" opacity="0.24"/>
<rect x="38.8" y="87.8" width="0.9" height="0.9" fill="#9aa6cc" opacity="0.17"/>
<rect x="65.1" y="97.1" width="0.9" height="0.9" fill="#9aa6cc" opacity="0.20"/>
<rect x="294.5" y="27.5" width="0.9" height="0.9" fill="#9aa6cc" opacity="0.25"/>
<rect x="21.9" y="45.8" width="0.9" height="0.9" fill="#9aa6cc" opacity="0.16"/>
<rect x="5.8" y="71.5" width="0.9" height="0.9" fill="#9aa6cc" opacity="0.13"/>
<rect x="114.0" y="77.9" width="0.9" height="0.9" fill="#9aa6cc" opacity="0.17"/>
<rect x="337.7" y="67.4" width="0.9" height="0.9" fill="#9aa6cc" opacity="0.27"/>
<rect x="213.9" y="93.4" width="0.9" height="0.9" fill="#9aa6cc" opacity="0.27"/>
<rect x="63.8" y="81.4" width="0.9" height="0.9" fill="#9aa6cc" opacity="0.16"/>
<rect x="290.2" y="73.2" width="0.9" height="0.9" fill="#9aa6cc" opacity="0.26"/>
<rect x="46.6" y="54.7" width="0.9" height="0.9" fill="#9aa6cc" opacity="0.24"/>
<rect x="360.3" y="75.8" width="0.9" height="0.9" fill="#9aa6cc" opacity="0.09"/>
<rect x="229.4" y="27.2" width="0.9" height="0.9" fill="#9aa6cc" opacity="0.20"/>
<rect x="305.1" y="25.1" width="0.9" height="0.9" fill="#9aa6cc" opacity="0.28"/>
<rect x="256.6" y="38.8" width="0.9" height="0.9" fill="#9aa6cc" opacity="0.12"/>
<rect x="169.8" y="87.4" width="0.9" height="0.9" fill="#9aa6cc" opacity="0.21"/>
<rect x="43.2" y="29.5" width="0.9" height="0.9" fill="#9aa6cc" opacity="0.10"/>
<rect x="304.3" y="31.2" width="0.9" height="0.9" fill="#9aa6cc" opacity="0.20"/>
<rect x="110.2" y="76.5" width="0.9" height="0.9" fill="#9aa6cc" opacity="0.16"/>
<rect x="54.8" y="91.0" width="0.9" height="0.9" fill="#9aa6cc" opacity="0.20"/>
<rect x="262.0" y="84.2" width="0.9" height="0.9" fill="#9aa6cc" opacity="0.29"/>
<rect x="5.2" y="53.8" width="0.9" height="0.9" fill="#9aa6cc" opacity="0.11"/>
<rect x="190.7" y="90.0" width="0.9" height="0.9" fill="#9aa6cc" opacity="0.26"/>
<rect x="13.5" y="42.2" width="0.9" height="0.9" fill="#9aa6cc" opacity="0.26"/>
<rect x="258.2" y="50.0" width="0.9" height="0.9" fill="#9aa6cc" opacity="0.18"/>
<rect x="60.1" y="88.7" width="0.9" height="0.9" fill="#9aa6cc" opacity="0.17"/>
<rect x="331.7" y="66.6" width="0.9" height="0.9" fill="#9aa6cc" opacity="0.10"/>
<rect x="125.1" y="40.5" width="0.9" height="0.9" fill="#9aa6cc" opacity="0.28"/>
<rect x="223.9" y="22.9" width="0.9" height="0.9" fill="#9aa6cc" opacity="0.12"/>
<rect x="137.2" y="59.3" width="0.9" height="0.9" fill="#9aa6cc" opacity="0.21"/>
<rect x="147.4" y="50.2" width="0.9" height="0.9" fill="#9aa6cc" opacity="0.08"/>
<rect x="220.1" y="46.4" width="0.9" height="0.9" fill="#9aa6cc" opacity="0.08"/>
<rect x="174.6" y="98.9" width="0.9" height="0.9" fill="#9aa6cc" opacity="0.09"/>
<rect x="55.4" y="76.1" width="0.9" height="0.9" fill="#9aa6cc" opacity="0.14"/>
<rect x="103.9" y="62.5" width="0.9" height="0.9" fill="#9aa6cc" opacity="0.14"/>
<rect x="216.2" y="62.1" width="0.9" height="0.9" fill="#9aa6cc" opacity="0.29"/>
<rect x="377.0" y="15.1" width="0.9" height="0.9" fill="#9aa6cc" opacity="0.20"/>
<rect x="292.9" y="89.3" width="0.9" height="0.9" fill="#9aa6cc" opacity="0.25"/>
<rect x="240.6" y="70.3" width="0.9" height="0.9" fill="#9aa6cc" opacity="0.16"/>
<rect x="107.0" y="84.6" width="0.9" height="0.9" fill="#9aa6cc" opacity="0.27"/>
<rect x="356.7" y="72.3" width="0.9" height="0.9" fill="#9aa6cc" opacity="0.15"/>
<rect x="290.1" y="78.2" width="0.9" height="0.9" fill="#9aa6cc" opacity="0.19"/>
<rect x="241.4" y="47.1" width="0.9" height="0.9" fill="#9aa6cc" opacity="0.20"/>
<rect x="154.3" y="27.4" width="0.9" height="0.9" fill="#9aa6cc" opacity="0.15"/>
<rect x="122.8" y="99.1" width="0.9" height="0.9" fill="#9aa6cc" opacity="0.19"/>
<rect x="139.6" y="42.0" width="0.9" height="0.9" fill="#9aa6cc" opacity="0.13"/>
<rect x="132.7" y="34.1" width="0.9" height="0.9" fill="#9aa6cc" opacity="0.08"/>
<rect x="331.0" y="53.1" width="0.9" height="0.9" fill="#9aa6cc" opacity="0.18"/>
<rect x="216.1" y="44.0" width="0.9" height="0.9" fill="#9aa6cc" opacity="0.12"/>
<rect x="25.2" y="50.3" width="0.9" height="0.9" fill="#9aa6cc" opacity="0.15"/>
<rect x="276.1" y="62.7" width="0.9" height="0.9" fill="#9aa6cc" opacity="0.29"/>
<rect x="129.4" y="94.0" width="0.9" height="0.9" fill="#9aa6cc" opacity="0.21"/>
<rect x="30.4" y="41.3" width="0.9" height="0.9" fill="#9aa6cc" opacity="0.21"/>
<rect x="375.2" y="43.6" width="0.9" height="0.9" fill="#9aa6cc" opacity="0.25"/>
<rect x="162.7" y="89.8" width="0.9" height="0.9" fill="#9aa6cc" opacity="0.09"/>
<rect x="184.1" y="92.1" width="0.9" height="0.9" fill="#9aa6cc" opacity="0.14"/>
<rect x="97.9" y="27.1" width="0.9" height="0.9" fill="#9aa6cc" opacity="0.12"/>
<rect x="101.9" y="77.9" width="0.9" height="0.9" fill="#9aa6cc" opacity="0.13"/>
<rect x="151.8" y="38.3" width="0.9" height="0.9" fill="#9aa6cc" opacity="0.21"/>
<rect x="328.3" y="69.9" width="0.9" height="0.9" fill="#9aa6cc" opacity="0.12"/>
<rect x="278.9" y="96.9" width="0.9" height="0.9" fill="#9aa6cc" opacity="0.21"/>
<rect x="30.1" y="86.4" width="0.9" height="0.9" fill="#9aa6cc" opacity="0.27"/>
<rect x="129.6" y="34.3" width="0.9" height="0.9" fill="#9aa6cc" opacity="0.12"/>
<rect x="204.0" y="90.1" width="0.9" height="0.9" fill="#9aa6cc" opacity="0.22"/>
<rect x="350.7" y="31.8" width="0.9" height="0.9" fill="#9aa6cc" opacity="0.15"/>
<rect x="284.7" y="70.7" width="0.9" height="0.9" fill="#9aa6cc" opacity="0.17"/>
<rect x="258.0" y="45.6" width="0.9" height="0.9" fill="#9aa6cc" opacity="0.09"/>
<rect x="157.4" y="26.1" width="0.9" height="0.9" fill="#9aa6cc" opacity="0.22"/>
<rect x="127.1" y="61.6" width="0.9" height="0.9" fill="#9aa6cc" opacity="0.21"/>
<rect x="97.7" y="60.0" width="0.9" height="0.9" fill="#9aa6cc" opacity="0.08"/>
<rect x="351.6" y="62.2" width="0.9" height="0.9" fill="#9aa6cc" opacity="0.30"/>
<rect x="21.3" y="72.6" width="0.9" height="0.9" fill="#9aa6cc" opacity="0.24"/>
<rect x="125.1" y="31.2" width="0.9" height="0.9" fill="#9aa6cc" opacity="0.11"/>
<rect x="54.2" y="83.1" width="0.9" height="0.9" fill="#9aa6cc" opacity="0.10"/>
<rect x="309.3" y="51.2" width="0.9" height="0.9" fill="#9aa6cc" opacity="0.20"/>
<rect x="223.6" y="64.1" width="0.9" height="0.9" fill="#9aa6cc" opacity="0.22"/>
<rect x="228.6" y="45.9" width="0.9" height="0.9" fill="#9aa6cc" opacity="0.24"/>
<rect x="98.0" y="78.5" width="0.9" height="0.9" fill="#9aa6cc" opacity="0.25"/>
<rect x="294.9" y="42.0" width="0.9" height="0.9" fill="#9aa6cc" opacity="0.25"/>
<rect x="371.4" y="52.1" width="0.9" height="0.9" fill="#9aa6cc" opacity="0.14"/>
<rect x="198.9" y="95.3" width="0.9" height="0.9" fill="#9aa6cc" opacity="0.11"/>
<rect x="3.4" y="63.2" width="0.9" height="0.9" fill="#9aa6cc" opacity="0.22"/>
<rect x="294.2" y="46.5" width="0.9" height="0.9" fill="#9aa6cc" opacity="0.30"/>
<rect x="86.7" y="82.0" width="0.9" height="0.9" fill="#9aa6cc" opacity="0.10"/>
<rect x="10.6" y="39.0" width="0.9" height="0.9" fill="#9aa6cc" opacity="0.09"/>
<rect x="190.7" y="64.8" width="0.9" height="0.9" fill="#9aa6cc" opacity="0.12"/>
<rect x="357.1" y="44.9" width="0.9" height="0.9" fill="#9aa6cc" opacity="0.11"/>
<rect x="67.4" y="80.8" width="0.9" height="0.9" fill="#9aa6cc" opacity="0.28"/>
<rect x="61.6" y="29.2" width="0.9" height="0.9" fill="#9aa6cc" opacity="0.25"/>
<rect x="92.2" y="98.7" width="0.9" height="0.9" fill="#9aa6cc" opacity="0.19"/>
<rect x="241.7" y="46.6" width="0.9" height="0.9" fill="#9aa6cc" opacity="0.26"/>
<rect x="174.8" y="47.1" width="0.9" height="0.9" fill="#9aa6cc" opacity="0.28"/>
<rect x="41.0" y="80.8" width="0.9" height="0.9" fill="#9aa6cc" opacity="0.09"/>
<rect x="245.3" y="51.2" width="0.9" height="0.9" fill="#9aa6cc" opacity="0.27"/>
<rect x="22.8" y="69.0" width="0.9" height="0.9" fill="#9aa6cc" opacity="0.17"/>
<rect x="349.3" y="95.2" width="0.9" height="0.9" fill="#9aa6cc" opacity="0.22"/>
<rect x="85.2" y="44.6" width="0.9" height="0.9" fill="#9aa6cc" opacity="0.14"/>
<rect x="164.8" y="40.2" width="0.9" height="0.9" fill="#9aa6cc" opacity="0.12"/>
<rect x="288.5" y="70.1" width="0.9" height="0.9" fill="#9aa6cc" opacity="0.15"/>
<rect x="377.8" y="31.1" width="0.9" height="0.9" fill="#9aa6cc" opacity="0.21"/>
<rect x="59.6" y="90.0" width="0.9" height="0.9" fill="#9aa6cc" opacity="0.27"/>
<rect x="101.6" y="81.4" width="0.9" height="0.9" fill="#9aa6cc" opacity="0.26"/>
<rect x="107.4" y="49.8" width="0.9" height="0.9" fill="#9aa6cc" opacity="0.19"/>
<rect x="338.6" y="27.9" width="0.9" height="0.9" fill="#9aa6cc" opacity="0.23"/>
<rect x="227.1" y="55.8" width="0.9" height="0.9" fill="#9aa6cc" opacity="0.21"/>
<rect x="335.5" y="32.1" width="0.9" height="0.9" fill="#9aa6cc" opacity="0.27"/>
<rect x="136.9" y="83.2" width="0.9" height="0.9" fill="#9aa6cc" opacity="0.27"/>
<rect x="69.3" y="90.0" width="0.9" height="0.9" fill="#9aa6cc" opacity="0.30"/>
<rect x="113.1" y="26.5" width="0.9" height="0.9" fill="#9aa6cc" opacity="0.10"/>
<rect x="370.2" y="13.3" width="0.9" height="0.9" fill="#9aa6cc" opacity="0.28"/>
<rect x="57.3" y="80.8" width="0.9" height="0.9" fill="#9aa6cc" opacity="0.10"/>
<rect x="64.1" y="76.8" width="0.9" height="0.9" fill="#9aa6cc" opacity="0.10"/>
<rect x="129.0" y="93.8" width="0.9" height="0.9" fill="#9aa6cc" opacity="0.24"/>
<rect x="335.1" y="98.3" width="0.9" height="0.9" fill="#9aa6cc" opacity="0.09"/>
<rect x="89.2" y="84.6" width="0.9" height="0.9" fill="#9aa6cc" opacity="0.23"/>
<rect x="14.4" y="65.0" width="0.9" height="0.9" fill="#9aa6cc" opacity="0.13"/>
<rect x="163.6" y="30.4" width="0.9" height="0.9" fill="#9aa6cc" opacity="0.08"/>
<rect x="376.5" y="40.0" width="0.9" height="0.9" fill="#9aa6cc" opacity="0.27"/>
<rect x="45.8" y="63.0" width="0.9" height="0.9" fill="#9aa6cc" opacity="0.11"/>
<rect x="162.8" y="36.2" width="0.9" height="0.9" fill="#9aa6cc" opacity="0.23"/>
<rect x="56.2" y="81.0" width="0.9" height="0.9" fill="#9aa6cc" opacity="0.19"/>
<rect x="42.7" y="53.4" width="0.9" height="0.9" fill="#9aa6cc" opacity="0.19"/>
<rect x="349.1" y="43.7" width="0.9" height="0.9" fill="#9aa6cc" opacity="0.13"/>
<rect x="367.7" y="89.8" width="0.9" height="0.9" fill="#9aa6cc" opacity="0.24"/>
<rect x="103.7" y="38.4" width="0.9" height="0.9" fill="#9aa6cc" opacity="0.14"/>
<rect x="26.2" y="31.8" width="0.9" height="0.9" fill="#9aa6cc" opacity="0.19"/>
<rect x="155.1" y="65.7" width="0.9" height="0.9" fill="#9aa6cc" opacity="0.16"/>
<rect x="4.0" y="78.1" width="0.9" height="0.9" fill="#9aa6cc" opacity="0.22"/>
<rect x="206.7" y="64.0" width="0.9" height="0.9" fill="#9aa6cc" opacity="0.23"/>
<rect x="373.3" y="89.0" width="0.9" height="0.9" fill="#9aa6cc" opacity="0.24"/>
<rect x="151.7" y="47.4" width="0.9" height="0.9" fill="#9aa6cc" opacity="0.17"/>
<rect x="369.7" y="46.4" width="0.9" height="0.9" fill="#9aa6cc" opacity="0.16"/>
<rect x="155.8" y="33.7" width="0.9" height="0.9" fill="#9aa6cc" opacity="0.30"/>
<rect x="2.0" y="72.5" width="0.9" height="0.9" fill="#9aa6cc" opacity="0.28"/>
<rect x="96.8" y="71.0" width="0.9" height="0.9" fill="#9aa6cc" opacity="0.16"/>
<rect x="91.5" y="40.4" width="0.9" height="0.9" fill="#9aa6cc" opacity="0.11"/>
<rect x="320.4" y="81.6" width="0.9" height="0.9" fill="#9aa6cc" opacity="0.28"/>
<rect x="18.8" y="78.3" width="0.9" height="0.9" fill="#9aa6cc" opacity="0.15"/>
<rect x="245.6" y="63.2" width="0.9" height="0.9" fill="#9aa6cc" opacity="0.15"/>
<rect x="369.2" y="12.6" width="0.9" height="0.9" fill="#9aa6cc" opacity="0.24"/>
<rect x="324.3" y="58.2" width="0.9" height="0.9" fill="#9aa6cc" opacity="0.21"/>
<rect x="378.0" y="32.7" width="0.9" height="0.9" fill="#9aa6cc" opacity="0.22"/>
<rect x="282.5" y="48.2" width="0.9" height="0.9" fill="#9aa6cc" opacity="0.24"/>
<rect x="149.5" y="63.5" width="0.9" height="0.9" fill="#9aa6cc" opacity="0.21"/>
<rect x="257.3" y="44.3" width="0.9" height="0.9" fill="#9aa6cc" opacity="0.22"/>
<rect x="206.4" y="38.0" width="0.9" height="0.9" fill="#9aa6cc" opacity="0.21"/>
<rect x="100.7" y="93.2" width="0.9" height="0.9" fill="#9aa6cc" opacity="0.18"/>
<rect x="274.2" y="60.3" width="0.9" height="0.9" fill="#9aa6cc" opacity="0.18"/>
<rect x="84.1" y="36.5" width="0.9" height="0.9" fill="#9aa6cc" opacity="0.28"/>
<rect x="200.9" y="62.1" width="0.9" height="0.9" fill="#9aa6cc" opacity="0.20"/>
<rect x="309.1" y="35.6" width="0.9" height="0.9" fill="#9aa6cc" opacity="0.12"/>
<rect x="312.3" y="54.2" width="0.9" height="0.9" fill="#9aa6cc" opacity="0.22"/>
<rect x="314.4" y="91.0" width="0.9" height="0.9" fill="#9aa6cc" opacity="0.27"/>
<rect x="606.5" y="17.2" width="0.9" height="0.9" fill="#9aa6cc" opacity="0.26"/>
<rect x="722.7" y="5.5" width="0.9" height="0.9" fill="#9aa6cc" opacity="0.11"/>
<rect x="637.7" y="4.6" width="0.9" height="0.9" fill="#9aa6cc" opacity="0.16"/>
<rect x="720.5" y="23.5" width="0.9" height="0.9" fill="#9aa6cc" opacity="0.18"/>
<rect x="613.2" y="17.8" width="0.9" height="0.9" fill="#9aa6cc" opacity="0.30"/>
<rect x="704.3" y="20.2" width="0.9" height="0.9" fill="#9aa6cc" opacity="0.19"/>
<rect x="719.7" y="34.1" width="0.9" height="0.9" fill="#9aa6cc" opacity="0.11"/>
<rect x="702.0" y="16.5" width="0.9" height="0.9" fill="#9aa6cc" opacity="0.19"/>
<rect x="635.6" y="16.7" width="0.9" height="0.9" fill="#9aa6cc" opacity="0.15"/>
<rect x="657.2" y="0.8" width="0.9" height="0.9" fill="#9aa6cc" opacity="0.12"/>
<rect x="685.6" y="2.6" width="0.9" height="0.9" fill="#9aa6cc" opacity="0.12"/>
<rect x="707.7" y="12.4" width="0.9" height="0.9" fill="#9aa6cc" opacity="0.15"/>
<rect x="636.3" y="37.5" width="0.9" height="0.9" fill="#9aa6cc" opacity="0.10"/>
<rect x="695.4" y="38.7" width="0.9" height="0.9" fill="#9aa6cc" opacity="0.12"/>
<rect x="663.5" y="35.7" width="0.9" height="0.9" fill="#9aa6cc" opacity="0.22"/>
<rect x="655.7" y="2.0" width="0.9" height="0.9" fill="#9aa6cc" opacity="0.18"/>
<rect x="655.1" y="32.1" width="0.9" height="0.9" fill="#9aa6cc" opacity="0.14"/>
<rect x="661.2" y="29.2" width="0.9" height="0.9" fill="#9aa6cc" opacity="0.26"/>
<rect x="652.9" y="17.3" width="0.9" height="0.9" fill="#9aa6cc" opacity="0.21"/>
<rect x="738.7" y="8.6" width="0.9" height="0.9" fill="#9aa6cc" opacity="0.29"/>
<rect x="706.8" y="16.8" width="0.9" height="0.9" fill="#9aa6cc" opacity="0.23"/>
<rect x="649.4" y="3.2" width="0.9" height="0.9" fill="#9aa6cc" opacity="0.25"/>
<rect x="656.9" y="23.7" width="0.9" height="0.9" fill="#9aa6cc" opacity="0.19"/>
<rect x="735.2" y="34.1" width="0.9" height="0.9" fill="#9aa6cc" opacity="0.09"/>
<rect x="688.9" y="20.8" width="0.9" height="0.9" fill="#9aa6cc" opacity="0.18"/>
<rect x="725.9" y="18.7" width="0.9" height="0.9" fill="#9aa6cc" opacity="0.18"/>
<rect x="733.6" y="19.8" width="0.9" height="0.9" fill="#9aa6cc" opacity="0.19"/>
<rect x="676.8" y="37.1" width="0.9" height="0.9" fill="#9aa6cc" opacity="0.23"/>
<rect x="711.1" y="18.1" width="0.9" height="0.9" fill="#9aa6cc" opacity="0.09"/>
<rect x="702.0" y="24.9" width="0.9" height="0.9" fill="#9aa6cc" opacity="0.25"/>
<rect x="715.5" y="5.3" width="0.9" height="0.9" fill="#9aa6cc" opacity="0.13"/>
<rect x="611.6" y="36.8" width="0.9" height="0.9" fill="#9aa6cc" opacity="0.10"/>
<rect x="613.2" y="33.9" width="0.9" height="0.9" fill="#9aa6cc" opacity="0.20"/>
<rect x="608.3" y="30.6" width="0.9" height="0.9" fill="#9aa6cc" opacity="0.24"/>
<rect x="672.4" y="2.5" width="0.9" height="0.9" fill="#9aa6cc" opacity="0.23"/>
<rect x="662.7" y="26.3" width="0.9" height="0.9" fill="#9aa6cc" opacity="0.30"/>
<rect x="722.5" y="39.2" width="0.9" height="0.9" fill="#9aa6cc" opacity="0.11"/>
<rect x="650.2" y="23.3" width="0.9" height="0.9" fill="#9aa6cc" opacity="0.08"/>
<rect x="748.3" y="12.4" width="0.9" height="0.9" fill="#9aa6cc" opacity="0.14"/>
<rect x="647.0" y="11.5" width="0.9" height="0.9" fill="#9aa6cc" opacity="0.27"/>
<rect x="683.4" y="23.0" width="0.9" height="0.9" fill="#9aa6cc" opacity="0.17"/>
<rect x="607.7" y="13.7" width="0.9" height="0.9" fill="#9aa6cc" opacity="0.27"/>
<rect x="720.3" y="38.5" width="0.9" height="0.9" fill="#9aa6cc" opacity="0.14"/>
<rect x="630.3" y="2.3" width="0.9" height="0.9" fill="#9aa6cc" opacity="0.20"/>
<rect x="656.1" y="20.9" width="0.9" height="0.9" fill="#9aa6cc" opacity="0.19"/>
<rect x="687.6" y="16.5" width="0.9" height="0.9" fill="#9aa6cc" opacity="0.26"/>
<rect x="630.0" y="41.4" width="0.9" height="0.9" fill="#9aa6cc" opacity="0.20"/>
<rect x="607.7" y="14.1" width="0.9" height="0.9" fill="#9aa6cc" opacity="0.20"/>
<rect x="661.3" y="25.4" width="0.9" height="0.9" fill="#9aa6cc" opacity="0.15"/>
<rect x="641.0" y="35.8" width="0.9" height="0.9" fill="#9aa6cc" opacity="0.14"/>
<rect x="706.6" y="36.1" width="0.9" height="0.9" fill="#9aa6cc" opacity="0.21"/>
<rect x="668.2" y="42.1" width="0.9" height="0.9" fill="#9aa6cc" opacity="0.18"/>
<rect x="731.7" y="2.6" width="0.9" height="0.9" fill="#9aa6cc" opacity="0.18"/>
<rect x="695.9" y="2.2" width="0.9" height="0.9" fill="#9aa6cc" opacity="0.27"/>
<rect x="610.8" y="26.8" width="0.9" height="0.9" fill="#9aa6cc" opacity="0.12"/>
<rect x="738.4" y="25.2" width="0.9" height="0.9" fill="#9aa6cc" opacity="0.26"/>
<rect x="674.7" y="30.3" width="0.9" height="0.9" fill="#9aa6cc" opacity="0.23"/>
<rect x="644.2" y="9.5" width="0.9" height="0.9" fill="#9aa6cc" opacity="0.26"/>
<rect x="621.9" y="41.3" width="0.9" height="0.9" fill="#9aa6cc" opacity="0.13"/>
<rect x="615.1" y="4.3" width="0.9" height="0.9" fill="#9aa6cc" opacity="0.25"/>
<rect x="742.6" y="18.7" width="0.9" height="0.9" fill="#9aa6cc" opacity="0.22"/>
<rect x="638.6" y="40.8" width="0.9" height="0.9" fill="#9aa6cc" opacity="0.23"/>
<rect x="623.2" y="2.5" width="0.9" height="0.9" fill="#9aa6cc" opacity="0.23"/>
<rect x="606.3" y="37.6" width="0.9" height="0.9" fill="#9aa6cc" opacity="0.14"/>
<rect x="634.9" y="26.2" width="0.9" height="0.9" fill="#9aa6cc" opacity="0.15"/>
<rect x="684.1" y="6.9" width="0.9" height="0.9" fill="#9aa6cc" opacity="0.28"/>
<rect x="648.7" y="37.9" width="0.9" height="0.9" fill="#9aa6cc" opacity="0.11"/>
<rect x="719.9" y="44.1" width="0.9" height="0.9" fill="#9aa6cc" opacity="0.17"/>
<rect x="604.9" y="17.1" width="0.9" height="0.9" fill="#9aa6cc" opacity="0.22"/>
<rect x="633.5" y="24.6" width="0.9" height="0.9" fill="#9aa6cc" opacity="0.10"/>
<rect x="669.7" y="32.8" width="0.9" height="0.9" fill="#9aa6cc" opacity="0.17"/>
<rect x="701.8" y="5.1" width="0.9" height="0.9" fill="#9aa6cc" opacity="0.26"/>
<rect x="618.3" y="41.5" width="0.9" height="0.9" fill="#9aa6cc" opacity="0.30"/>
<rect x="740.9" y="23.7" width="0.9" height="0.9" fill="#9aa6cc" opacity="0.14"/>
<rect x="652.2" y="33.8" width="0.9" height="0.9" fill="#9aa6cc" opacity="0.19"/>
<rect x="739.5" y="4.2" width="0.9" height="0.9" fill="#9aa6cc" opacity="0.19"/>
<rect x="729.6" y="26.9" width="0.9" height="0.9" fill="#9aa6cc" opacity="0.20"/>
<rect x="613.3" y="6.3" width="0.9" height="0.9" fill="#9aa6cc" opacity="0.14"/>
<rect x="734.0" y="38.0" width="0.9" height="0.9" fill="#9aa6cc" opacity="0.13"/>
<rect x="738.7" y="1.5" width="0.9" height="0.9" fill="#9aa6cc" opacity="0.21"/>
<rect x="745.1" y="15.5" width="0.9" height="0.9" fill="#9aa6cc" opacity="0.29"/>
<rect x="698.5" y="2.3" width="0.9" height="0.9" fill="#9aa6cc" opacity="0.15"/>
<rect x="667.4" y="11.1" width="0.9" height="0.9" fill="#9aa6cc" opacity="0.24"/>
<rect x="626.8" y="35.4" width="0.9" height="0.9" fill="#9aa6cc" opacity="0.15"/>
<rect x="610.4" y="25.2" width="0.9" height="0.9" fill="#9aa6cc" opacity="0.10"/>
<rect x="682.7" y="35.5" width="0.9" height="0.9" fill="#9aa6cc" opacity="0.21"/>
<rect x="669.2" y="1.5" width="0.9" height="0.9" fill="#9aa6cc" opacity="0.19"/>
<rect x="614.6" y="29.1" width="0.9" height="0.9" fill="#9aa6cc" opacity="0.11"/>
<rect x="686.7" y="15.9" width="0.9" height="0.9" fill="#9aa6cc" opacity="0.16"/>
<rect x="699.5" y="7.4" width="0.9" height="0.9" fill="#9aa6cc" opacity="0.12"/>
<rect x="741.2" y="14.9" width="0.9" height="0.9" fill="#9aa6cc" opacity="0.27"/>
<rect x="731.0" y="21.6" width="0.9" height="0.9" fill="#9aa6cc" opacity="0.11"/>
<rect x="614.1" y="39.6" width="0.9" height="0.9" fill="#9aa6cc" opacity="0.11"/>
<rect x="674.4" y="24.1" width="0.9" height="0.9" fill="#9aa6cc" opacity="0.11"/>
<rect x="670.2" y="7.4" width="0.9" height="0.9" fill="#9aa6cc" opacity="0.20"/>
<rect x="676.0" y="16.5" width="0.9" height="0.9" fill="#9aa6cc" opacity="0.12"/>
<rect x="660.6" y="9.2" width="0.9" height="0.9" fill="#9aa6cc" opacity="0.11"/>
<rect x="636.0" y="39.2" width="0.9" height="0.9" fill="#9aa6cc" opacity="0.19"/>
<rect x="733.6" y="0.7" width="0.9" height="0.9" fill="#9aa6cc" opacity="0.29"/>
<rect x="673.3" y="35.6" width="0.9" height="0.9" fill="#9aa6cc" opacity="0.21"/>
<rect x="703.3" y="10.3" width="0.9" height="0.9" fill="#9aa6cc" opacity="0.25"/>
<rect x="623.0" y="11.9" width="0.9" height="0.9" fill="#9aa6cc" opacity="0.09"/>
<rect x="659.0" y="23.3" width="0.9" height="0.9" fill="#9aa6cc" opacity="0.14"/>
<rect x="733.6" y="3.8" width="0.9" height="0.9" fill="#9aa6cc" opacity="0.21"/>
<rect x="635.1" y="26.8" width="0.9" height="0.9" fill="#9aa6cc" opacity="0.25"/>
<rect x="706.6" y="2.8" width="0.9" height="0.9" fill="#9aa6cc" opacity="0.13"/>
<rect x="689.9" y="44.2" width="0.9" height="0.9" fill="#9aa6cc" opacity="0.09"/>
<rect x="692.7" y="31.1" width="0.9" height="0.9" fill="#9aa6cc" opacity="0.26"/>
<rect x="651.3" y="36.5" width="0.9" height="0.9" fill="#9aa6cc" opacity="0.18"/>
<rect x="738.1" y="0.5" width="0.9" height="0.9" fill="#9aa6cc" opacity="0.29"/>
<rect x="661.8" y="18.3" width="0.9" height="0.9" fill="#9aa6cc" opacity="0.10"/>
<rect x="636.7" y="33.0" width="0.9" height="0.9" fill="#9aa6cc" opacity="0.23"/>
<rect x="622.7" y="15.5" width="0.9" height="0.9" fill="#9aa6cc" opacity="0.11"/>
<rect x="629.7" y="9.9" width="0.9" height="0.9" fill="#9aa6cc" opacity="0.15"/>
<rect x="746.4" y="44.9" width="0.9" height="0.9" fill="#9aa6cc" opacity="0.25"/>
<rect x="672.0" y="22.4" width="0.9" height="0.9" fill="#9aa6cc" opacity="0.25"/>
<rect x="736.2" y="33.8" width="0.9" height="0.9" fill="#9aa6cc" opacity="0.22"/>
<rect x="629.9" y="28.1" width="0.9" height="0.9" fill="#9aa6cc" opacity="0.27"/>
<rect x="718.0" y="4.2" width="0.9" height="0.9" fill="#9aa6cc" opacity="0.24"/>
<rect x="652.4" y="7.3" width="0.9" height="0.9" fill="#9aa6cc" opacity="0.29"/>
<rect x="700.9" y="33.6" width="0.9" height="0.9" fill="#9aa6cc" opacity="0.11"/>
<rect x="724.3" y="42.2" width="0.9" height="0.9" fill="#9aa6cc" opacity="0.28"/>
<rect x="711.7" y="37.5" width="0.9" height="0.9" fill="#9aa6cc" opacity="0.26"/>
<rect x="688.6" y="19.6" width="0.9" height="0.9" fill="#9aa6cc" opacity="0.26"/>
<rect x="717.7" y="39.2" width="0.9" height="0.9" fill="#9aa6cc" opacity="0.15"/>
<rect x="744.1" y="23.9" width="0.9" height="0.9" fill="#9aa6cc" opacity="0.29"/>
<rect x="617.4" y="43.6" width="0.9" height="0.9" fill="#9aa6cc" opacity="0.25"/>
<rect x="637.8" y="37.7" width="0.9" height="0.9" fill="#9aa6cc" opacity="0.13"/>
<rect x="629.7" y="20.6" width="0.9" height="0.9" fill="#9aa6cc" opacity="0.13"/>
<rect x="673.9" y="40.9" width="0.9" height="0.9" fill="#9aa6cc" opacity="0.23"/>
<rect x="706.6" y="17.6" width="0.9" height="0.9" fill="#9aa6cc" opacity="0.25"/>
<rect x="719.0" y="30.7" width="0.9" height="0.9" fill="#9aa6cc" opacity="0.29"/>
<rect x="723.9" y="18.3" width="0.9" height="0.9" fill="#9aa6cc" opacity="0.10"/>
<rect x="697.9" y="37.6" width="0.9" height="0.9" fill="#9aa6cc" opacity="0.15"/>
<rect x="689.2" y="37.6" width="0.9" height="0.9" fill="#9aa6cc" opacity="0.25"/>
<rect x="600.7" y="22.0" width="0.9" height="0.9" fill="#9aa6cc" opacity="0.08"/>
<rect x="616.6" y="36.6" width="0.9" height="0.9" fill="#9aa6cc" opacity="0.17"/>
<rect x="690.7" y="20.6" width="0.9" height="0.9" fill="#9aa6cc" opacity="0.15"/>
<rect x="632.0" y="15.9" width="0.9" height="0.9" fill="#9aa6cc" opacity="0.27"/>
<rect x="692.9" y="13.1" width="0.9" height="0.9" fill="#9aa6cc" opacity="0.10"/>
<rect x="640.7" y="31.6" width="0.9" height="0.9" fill="#9aa6cc" opacity="0.18"/>
<rect x="699.1" y="36.3" width="0.9" height="0.9" fill="#9aa6cc" opacity="0.11"/>
<rect x="702.4" y="1.9" width="0.9" height="0.9" fill="#9aa6cc" opacity="0.26"/>
<rect x="627.6" y="12.2" width="0.9" height="0.9" fill="#9aa6cc" opacity="0.29"/>
<rect x="654.4" y="10.1" width="0.9" height="0.9" fill="#9aa6cc" opacity="0.28"/>
<rect x="691.5" y="40.2" width="0.9" height="0.9" fill="#9aa6cc" opacity="0.17"/>
<rect x="675.0" y="43.0" width="0.9" height="0.9" fill="#9aa6cc" opacity="0.19"/>
<rect x="748.3" y="8.5" width="0.9" height="0.9" fill="#9aa6cc" opacity="0.26"/>
<rect x="624.3" y="23.7" width="0.9" height="0.9" fill="#9aa6cc" opacity="0.08"/>
<rect x="626.3" y="42.5" width="0.9" height="0.9" fill="#9aa6cc" opacity="0.18"/>
<rect x="721.4" y="11.3" width="0.9" height="0.9" fill="#9aa6cc" opacity="0.16"/>
<rect x="615.1" y="24.9" width="0.9" height="0.9" fill="#9aa6cc" opacity="0.27"/>
<rect x="677.1" y="17.0" width="0.9" height="0.9" fill="#9aa6cc" opacity="0.28"/>
<rect x="734.1" y="30.0" width="0.9" height="0.9" fill="#9aa6cc" opacity="0.10"/>
<rect x="693.6" y="20.0" width="0.9" height="0.9" fill="#9aa6cc" opacity="0.29"/>
<rect x="654.3" y="29.8" width="0.9" height="0.9" fill="#9aa6cc" opacity="0.22"/>
<rect x="656.4" y="23.5" width="0.9" height="0.9" fill="#9aa6cc" opacity="0.23"/>
<rect x="736.1" y="22.4" width="0.9" height="0.9" fill="#9aa6cc" opacity="0.16"/>
<rect x="746.4" y="2.6" width="0.9" height="0.9" fill="#9aa6cc" opacity="0.26"/>
<rect x="702.5" y="25.1" width="0.9" height="0.9" fill="#9aa6cc" opacity="0.18"/>
<rect x="712.7" y="40.1" width="0.9" height="0.9" fill="#9aa6cc" opacity="0.24"/>
<rect x="712.5" y="1.6" width="0.9" height="0.9" fill="#9aa6cc" opacity="0.15"/>
<rect x="620.5" y="42.9" width="0.9" height="0.9" fill="#9aa6cc" opacity="0.28"/>
<rect x="621.7" y="26.4" width="0.9" height="0.9" fill="#9aa6cc" opacity="0.21"/>
<rect x="607.0" y="17.6" width="0.9" height="0.9" fill="#9aa6cc" opacity="0.24"/>
<rect x="696.2" y="12.6" width="0.9" height="0.9" fill="#9aa6cc" opacity="0.25"/>
<rect x="643.7" y="24.5" width="0.9" height="0.9" fill="#9aa6cc" opacity="0.17"/>
<rect x="746.7" y="29.2" width="0.9" height="0.9" fill="#9aa6cc" opacity="0.26"/>
<rect x="701.5" y="17.1" width="0.9" height="0.9" fill="#9aa6cc" opacity="0.29"/>
<rect x="706.5" y="31.1" width="0.9" height="0.9" fill="#9aa6cc" opacity="0.14"/>
<rect x="624.3" y="25.9" width="0.9" height="0.9" fill="#9aa6cc" opacity="0.26"/>
<rect x="719.0" y="15.6" width="0.9" height="0.9" fill="#9aa6cc" opacity="0.11"/>
<rect x="677.4" y="39.5" width="0.9" height="0.9" fill="#9aa6cc" opacity="0.12"/>
<rect x="710.8" y="7.7" width="0.9" height="0.9" fill="#9aa6cc" opacity="0.15"/>
<rect x="608.0" y="13.4" width="0.9" height="0.9" fill="#9aa6cc" opacity="0.16"/>
<rect x="745.0" y="43.3" width="0.9" height="0.9" fill="#9aa6cc" opacity="0.12"/>
<rect x="646.4" y="42.5" width="0.9" height="0.9" fill="#9aa6cc" opacity="0.12"/>
<rect x="648.1" y="19.7" width="0.9" height="0.9" fill="#9aa6cc" opacity="0.10"/>
<rect x="639.0" y="17.7" width="0.9" height="0.9" fill="#9aa6cc" opacity="0.16"/>
<rect x="744.5" y="12.0" width="0.9" height="0.9" fill="#9aa6cc" opacity="0.12"/>
<rect x="736.3" y="20.3" width="0.9" height="0.9" fill="#9aa6cc" opacity="0.26"/>
<rect x="695.6" y="35.0" width="0.9" height="0.9" fill="#9aa6cc" opacity="0.15"/>
<rect x="622.8" y="34.1" width="0.9" height="0.9" fill="#9aa6cc" opacity="0.18"/>
<rect x="683.8" y="30.2" width="0.9" height="0.9" fill="#9aa6cc" opacity="0.25"/>
<rect x="641.3" y="16.3" width="0.9" height="0.9" fill="#9aa6cc" opacity="0.28"/>
<rect x="679.4" y="13.0" width="0.9" height="0.9" fill="#9aa6cc" opacity="0.22"/>
<rect x="639.0" y="34.7" width="0.9" height="0.9" fill="#9aa6cc" opacity="0.09"/>
<rect x="724.0" y="25.5" width="0.9" height="0.9" fill="#9aa6cc" opacity="0.16"/>
<rect x="741.0" y="11.9" width="0.9" height="0.9" fill="#9aa6cc" opacity="0.13"/>
<rect x="610.5" y="24.7" width="0.9" height="0.9" fill="#9aa6cc" opacity="0.25"/>
<rect x="701.7" y="18.6" width="0.9" height="0.9" fill="#9aa6cc" opacity="0.26"/>
<rect x="616.7" y="13.8" width="0.9" height="0.9" fill="#9aa6cc" opacity="0.22"/>
<rect x="745.1" y="28.5" width="0.9" height="0.9" fill="#9aa6cc" opacity="0.23"/>
<rect x="716.2" y="17.8" width="0.9" height="0.9" fill="#9aa6cc" opacity="0.29"/>
<rect x="711.4" y="15.4" width="0.9" height="0.9" fill="#9aa6cc" opacity="0.17"/>
<rect x="720.9" y="15.7" width="0.9" height="0.9" fill="#9aa6cc" opacity="0.12"/>
<rect x="730.7" y="23.9" width="0.9" height="0.9" fill="#9aa6cc" opacity="0.19"/>
<rect x="700.4" y="40.6" width="0.9" height="0.9" fill="#9aa6cc" opacity="0.11"/>
<rect x="650.8" y="3.0" width="0.9" height="0.9" fill="#9aa6cc" opacity="0.17"/>
<rect x="675.3" y="38.3" width="0.9" height="0.9" fill="#9aa6cc" opacity="0.23"/>
<rect x="686.7" y="18.2" width="0.9" height="0.9" fill="#9aa6cc" opacity="0.21"/>
<rect x="641.1" y="38.0" width="0.9" height="0.9" fill="#9aa6cc" opacity="0.25"/>
<rect x="725.8" y="6.8" width="0.9" height="0.9" fill="#9aa6cc" opacity="0.23"/>
<rect x="713.1" y="22.5" width="0.9" height="0.9" fill="#9aa6cc" opacity="0.28"/>
<rect x="734.8" y="33.4" width="0.9" height="0.9" fill="#9aa6cc" opacity="0.26"/>
<rect x="697.3" y="39.5" width="0.9" height="0.9" fill="#9aa6cc" opacity="0.11"/>
<rect x="705.6" y="31.7" width="0.9" height="0.9" fill="#9aa6cc" opacity="0.21"/>
<rect x="641.3" y="3.0" width="0.9" height="0.9" fill="#9aa6cc" opacity="0.21"/>
<rect x="723.6" y="12.3" width="0.9" height="0.9" fill="#9aa6cc" opacity="0.13"/>
<rect x="633.6" y="4.2" width="0.9" height="0.9" fill="#9aa6cc" opacity="0.23"/>
<rect x="746.2" y="36.1" width="0.9" height="0.9" fill="#9aa6cc" opacity="0.16"/>
<rect x="704.9" y="3.2" width="0.9" height="0.9" fill="#9aa6cc" opacity="0.26"/>
<rect x="648.8" y="0.2" width="0.9" height="0.9" fill="#9aa6cc" opacity="0.22"/>
<rect x="620.8" y="12.4" width="0.9" height="0.9" fill="#9aa6cc" opacity="0.09"/>
<rect x="666.9" y="25.0" width="0.9" height="0.9" fill="#9aa6cc" opacity="0.26"/>
<rect x="605.9" y="37.2" width="0.9" height="0.9" fill="#9aa6cc" opacity="0.10"/>
<rect x="633.7" y="28.3" width="0.9" height="0.9" fill="#9aa6cc" opacity="0.15"/>
<rect x="649.7" y="25.6" width="0.9" height="0.9" fill="#9aa6cc" opacity="0.13"/>
<rect x="719.0" y="9.4" width="0.9" height="0.9" fill="#9aa6cc" opacity="0.26"/>
<rect x="721.3" y="24.2" width="0.9" height="0.9" fill="#9aa6cc" opacity="0.09"/>
<rect x="716.7" y="1.3" width="0.9" height="0.9" fill="#9aa6cc" opacity="0.19"/>
<rect x="663.6" y="2.8" width="0.9" height="0.9" fill="#9aa6cc" opacity="0.22"/>
<rect x="708.7" y="26.3" width="0.9" height="0.9" fill="#9aa6cc" opacity="0.17"/>
<rect x="676.8" y="26.5" width="0.9" height="0.9" fill="#9aa6cc" opacity="0.13"/>
<rect x="730.1" y="44.8" width="0.9" height="0.9" fill="#9aa6cc" opacity="0.26"/>
<rect x="744.2" y="14.8" width="0.9" height="0.9" fill="#9aa6cc" opacity="0.30"/>
<rect x="610.7" y="21.5" width="0.9" height="0.9" fill="#9aa6cc" opacity="0.11"/>
<rect x="668.1" y="30.7" width="0.9" height="0.9" fill="#9aa6cc" opacity="0.24"/>
<rect x="668.2" y="15.4" width="0.9" height="0.9" fill="#9aa6cc" opacity="0.12"/>
<rect x="660.4" y="12.7" width="0.9" height="0.9" fill="#9aa6cc" opacity="0.12"/>
<rect x="710.4" y="23.2" width="0.9" height="0.9" fill="#9aa6cc" opacity="0.18"/>
<rect x="629.7" y="31.7" width="0.9" height="0.9" fill="#9aa6cc" opacity="0.12"/>
<rect x="639.8" y="25.2" width="0.9" height="0.9" fill="#9aa6cc" opacity="0.23"/>
<rect x="746.0" y="33.6" width="0.9" height="0.9" fill="#9aa6cc" opacity="0.29"/>
<rect x="738.0" y="32.5" width="0.9" height="0.9" fill="#9aa6cc" opacity="0.24"/>
<rect x="609.4" y="9.3" width="0.9" height="0.9" fill="#9aa6cc" opacity="0.08"/>
<rect x="729.5" y="32.5" width="0.9" height="0.9" fill="#9aa6cc" opacity="0.22"/>
<rect x="639.6" y="16.0" width="0.9" height="0.9" fill="#9aa6cc" opacity="0.12"/>
<rect x="694.8" y="44.6" width="0.9" height="0.9" fill="#9aa6cc" opacity="0.15"/>
<rect x="606.6" y="7.9" width="0.9" height="0.9" fill="#9aa6cc" opacity="0.16"/>
<rect x="734.8" y="36.2" width="0.9" height="0.9" fill="#9aa6cc" opacity="0.18"/>
<rect x="615.3" y="4.8" width="0.9" height="0.9" fill="#9aa6cc" opacity="0.11"/>
<rect x="716.6" y="21.2" width="0.9" height="0.9" fill="#9aa6cc" opacity="0.30"/>
<rect x="736.8" y="35.8" width="0.9" height="0.9" fill="#9aa6cc" opacity="0.18"/>
<rect x="723.3" y="5.8" width="0.9" height="0.9" fill="#9aa6cc" opacity="0.10"/>
<rect x="684.5" y="22.9" width="0.9" height="0.9" fill="#9aa6cc" opacity="0.13"/>
<rect x="637.8" y="1.0" width="0.9" height="0.9" fill="#9aa6cc" opacity="0.28"/>
<rect x="706.5" y="42.5" width="0.9" height="0.9" fill="#9aa6cc" opacity="0.30"/>
<rect x="665.5" y="33.0" width="0.9" height="0.9" fill="#9aa6cc" opacity="0.16"/>
<rect x="721.8" y="37.9" width="0.9" height="0.9" fill="#9aa6cc" opacity="0.11"/>
<rect x="251.7" y="62.8" width="1" height="1" fill="#b9c3e6" opacity="0.31"/>
<rect x="251.2" y="65.8" width="1" height="1" fill="#b9c3e6" opacity="0.45"/>
<rect x="352.2" y="54.8" width="1" height="1" fill="#b9c3e6" opacity="0.47"/>
<rect x="319.4" y="57.9" width="1" height="1" fill="#b9c3e6" opacity="0.22"/>
<rect x="292.0" y="55.0" width="1" height="1" fill="#b9c3e6" opacity="0.35"/>
<rect x="333.1" y="52.5" width="1" height="1" fill="#b9c3e6" opacity="0.26"/>
<rect x="281.6" y="62.5" width="1" height="1" fill="#b9c3e6" opacity="0.23"/>
<rect x="326.9" y="55.6" width="1" height="1" fill="#b9c3e6" opacity="0.24"/>
<rect x="276.0" y="56.6" width="1" height="1" fill="#b9c3e6" opacity="0.39"/>
<rect x="341.9" y="57.4" width="1" height="1" fill="#b9c3e6" opacity="0.33"/>
<rect x="258.8" y="61.3" width="1" height="1" fill="#b9c3e6" opacity="0.34"/>
<rect x="302.0" y="57.8" width="1" height="1" fill="#b9c3e6" opacity="0.40"/>
<rect x="342.8" y="56.6" width="1" height="1" fill="#b9c3e6" opacity="0.41"/>
<rect x="311.3" y="62.6" width="1" height="1" fill="#b9c3e6" opacity="0.24"/>
<rect x="368.2" y="53.9" width="1" height="1" fill="#b9c3e6" opacity="0.27"/>
<rect x="378.3" y="53.5" width="1" height="1" fill="#b9c3e6" opacity="0.27"/>
<rect x="301.0" y="60.2" width="1" height="1" fill="#b9c3e6" opacity="0.39"/>
<rect x="346.4" y="50.6" width="1" height="1" fill="#b9c3e6" opacity="0.21"/>
<rect x="262.2" y="66.6" width="1" height="1" fill="#b9c3e6" opacity="0.21"/>
<rect x="256.3" y="60.8" width="1" height="1" fill="#b9c3e6" opacity="0.27"/>
<rect x="371.0" y="55.4" width="1" height="1" fill="#b9c3e6" opacity="0.48"/>
<rect x="333.0" y="61.3" width="1" height="1" fill="#b9c3e6" opacity="0.48"/>
<rect x="284.2" y="60.2" width="1" height="1" fill="#b9c3e6" opacity="0.43"/>
<rect x="263.5" y="61.6" width="1" height="1" fill="#b9c3e6" opacity="0.49"/>
<rect x="342.3" y="58.4" width="1" height="1" fill="#b9c3e6" opacity="0.25"/>
<rect x="316.6" y="62.9" width="1" height="1" fill="#b9c3e6" opacity="0.23"/>
<rect x="352.3" y="60.8" width="1" height="1" fill="#b9c3e6" opacity="0.20"/>
<rect x="360.7" y="50.9" width="1" height="1" fill="#b9c3e6" opacity="0.37"/>
<rect x="356.8" y="51.3" width="1" height="1" fill="#b9c3e6" opacity="0.38"/>
<rect x="353.9" y="55.5" width="1" height="1" fill="#b9c3e6" opacity="0.22"/>
<rect x="257.1" y="59.2" width="1" height="1" fill="#b9c3e6" opacity="0.32"/>
<rect x="251.0" y="61.2" width="1" height="1" fill="#b9c3e6" opacity="0.42"/>
<rect x="253.1" y="64.4" width="1" height="1" fill="#b9c3e6" opacity="0.34"/>
<rect x="265.9" y="56.2" width="1" height="1" fill="#b9c3e6" opacity="0.40"/>
<rect x="276.9" y="59.0" width="1" height="1" fill="#b9c3e6" opacity="0.49"/>
<rect x="321.0" y="58.3" width="1" height="1" fill="#b9c3e6" opacity="0.31"/>
<rect x="262.2" y="60.5" width="1" height="1" fill="#b9c3e6" opacity="0.45"/>
<rect x="263.2" y="55.4" width="1" height="1" fill="#b9c3e6" opacity="0.31"/>
<rect x="289.4" y="59.7" width="1" height="1" fill="#b9c3e6" opacity="0.38"/>
<rect x="377.2" y="52.5" width="1" height="1" fill="#b9c3e6" opacity="0.43"/>
<rect x="250.9" y="63.3" width="1" height="1" fill="#b9c3e6" opacity="0.41"/>
<rect x="327.8" y="57.9" width="1" height="1" fill="#b9c3e6" opacity="0.36"/>
<rect x="309.2" y="54.9" width="1" height="1" fill="#b9c3e6" opacity="0.39"/>
<rect x="369.1" y="56.9" width="1" height="1" fill="#b9c3e6" opacity="0.42"/>
<rect x="353.6" y="60.5" width="1" height="1" fill="#b9c3e6" opacity="0.42"/>
<rect x="254.0" y="58.8" width="1" height="1" fill="#b9c3e6" opacity="0.40"/>
<rect x="360.5" y="49.6" width="1" height="1" fill="#b9c3e6" opacity="0.25"/>
<rect x="372.6" y="57.1" width="1" height="1" fill="#b9c3e6" opacity="0.33"/>
<rect x="341.8" y="56.3" width="1" height="1" fill="#b9c3e6" opacity="0.30"/>
<rect x="292.2" y="61.9" width="1" height="1" fill="#b9c3e6" opacity="0.23"/>
<rect x="307.6" y="62.8" width="1" height="1" fill="#b9c3e6" opacity="0.48"/>
<rect x="349.1" y="55.4" width="1" height="1" fill="#b9c3e6" opacity="0.45"/>
<rect x="379.3" y="54.1" width="1" height="1" fill="#b9c3e6" opacity="0.27"/>
<rect x="303.6" y="56.3" width="1" height="1" fill="#b9c3e6" opacity="0.21"/>
<rect x="280.0" y="65.3" width="1" height="1" fill="#b9c3e6" opacity="0.30"/>
<rect x="350.2" y="51.4" width="1" height="1" fill="#b9c3e6" opacity="0.43"/>
<rect x="365.7" y="55.9" width="1" height="1" fill="#b9c3e6" opacity="0.23"/>
<rect x="357.3" y="51.8" width="1" height="1" fill="#b9c3e6" opacity="0.29"/>
<rect x="331.5" y="54.5" width="1" height="1" fill="#b9c3e6" opacity="0.49"/>
<rect x="270.9" y="63.5" width="1" height="1" fill="#b9c3e6" opacity="0.36"/>
<rect x="334.5" y="49.9" width="1" height="1" fill="#b9c3e6" opacity="0.32"/>
<rect x="368.8" y="53.0" width="1" height="1" fill="#b9c3e6" opacity="0.41"/>
<rect x="375.8" y="56.0" width="1" height="1" fill="#b9c3e6" opacity="0.29"/>
<rect x="367.8" y="55.9" width="1" height="1" fill="#b9c3e6" opacity="0.20"/>
<rect x="283.8" y="58.0" width="1" height="1" fill="#b9c3e6" opacity="0.25"/>
<rect x="306.9" y="49.6" width="1" height="1" fill="#b9c3e6" opacity="0.41"/>
<rect x="339.8" y="56.3" width="1" height="1" fill="#b9c3e6" opacity="0.27"/>
<rect x="283.4" y="54.9" width="1" height="1" fill="#b9c3e6" opacity="0.21"/>
<rect x="339.8" y="57.1" width="1" height="1" fill="#b9c3e6" opacity="0.49"/>
<rect x="333.6" y="59.1" width="1" height="1" fill="#b9c3e6" opacity="0.38"/>
<rect x="335.3" y="53.0" width="1" height="1" fill="#b9c3e6" opacity="0.29"/>
<rect x="258.3" y="58.8" width="1" height="1" fill="#b9c3e6" opacity="0.22"/>
<rect x="251.9" y="60.8" width="1" height="1" fill="#b9c3e6" opacity="0.23"/>
<rect x="314.2" y="59.3" width="1" height="1" fill="#b9c3e6" opacity="0.49"/>
<rect x="339.4" y="55.7" width="1" height="1" fill="#b9c3e6" opacity="0.25"/>
<rect x="263.0" y="66.3" width="1" height="1" fill="#b9c3e6" opacity="0.29"/>
<rect x="303.2" y="57.5" width="1" height="1" fill="#b9c3e6" opacity="0.42"/>
<rect x="262.3" y="58.2" width="1" height="1" fill="#b9c3e6" opacity="0.48"/>
<rect x="294.5" y="59.6" width="1" height="1" fill="#b9c3e6" opacity="0.45"/>
<rect x="279.4" y="59.5" width="1" height="1" fill="#b9c3e6" opacity="0.46"/>
<rect x="354.4" y="54.4" width="1" height="1" fill="#b9c3e6" opacity="0.20"/>
<rect x="274.7" y="58.4" width="1" height="1" fill="#b9c3e6" opacity="0.47"/>
<rect x="270.5" y="58.6" width="1" height="1" fill="#b9c3e6" opacity="0.40"/>
<rect x="273.5" y="57.2" width="1" height="1" fill="#b9c3e6" opacity="0.24"/>
<rect x="262.6" y="64.2" width="1" height="1" fill="#b9c3e6" opacity="0.40"/>
<rect x="324.1" y="57.1" width="1" height="1" fill="#b9c3e6" opacity="0.27"/>
<rect x="258.4" y="67.3" width="1" height="1" fill="#b9c3e6" opacity="0.24"/>
<rect x="375.2" y="54.8" width="1" height="1" fill="#b9c3e6" opacity="0.31"/>
<rect x="343.9" y="59.6" width="1" height="1" fill="#b9c3e6" opacity="0.28"/>
<rect x="297.6" y="63.1" width="1" height="1" fill="#b9c3e6" opacity="0.36"/>
<rect x="264.5" y="61.2" width="1" height="1" fill="#b9c3e6" opacity="0.29"/>
<rect x="299.5" y="64.3" width="1" height="1" fill="#b9c3e6" opacity="0.43"/>
<rect x="279.1" y="60.9" width="1" height="1" fill="#b9c3e6" opacity="0.32"/>
<rect x="297.5" y="61.1" width="1" height="1" fill="#b9c3e6" opacity="0.39"/>
<rect x="311.3" y="58.9" width="1" height="1" fill="#b9c3e6" opacity="0.40"/>
<rect x="358.7" y="54.6" width="1" height="1" fill="#b9c3e6" opacity="0.27"/>
<rect x="253.8" y="60.4" width="1" height="1" fill="#b9c3e6" opacity="0.34"/>
<rect x="342.5" y="56.9" width="1" height="1" fill="#b9c3e6" opacity="0.23"/>
<rect x="265.3" y="59.2" width="1" height="1" fill="#b9c3e6" opacity="0.27"/>
<rect x="307.2" y="58.7" width="1" height="1" fill="#b9c3e6" opacity="0.24"/>
<rect x="258.8" y="59.3" width="1" height="1" fill="#b9c3e6" opacity="0.48"/>
<rect x="322.1" y="60.1" width="1" height="1" fill="#b9c3e6" opacity="0.22"/>
<rect x="278.9" y="60.1" width="1" height="1" fill="#b9c3e6" opacity="0.46"/>
<rect x="375.1" y="50.4" width="1" height="1" fill="#b9c3e6" opacity="0.46"/>
<rect x="264.3" y="64.6" width="1" height="1" fill="#b9c3e6" opacity="0.27"/>
<rect x="272.2" y="59.4" width="1" height="1" fill="#b9c3e6" opacity="0.46"/>
<rect x="277.6" y="62.3" width="1" height="1" fill="#b9c3e6" opacity="0.48"/>
<rect x="309.9" y="59.5" width="1" height="1" fill="#b9c3e6" opacity="0.42"/>
<rect x="259.7" y="58.9" width="1" height="1" fill="#b9c3e6" opacity="0.26"/>
<rect x="336.2" y="57.5" width="1" height="1" fill="#b9c3e6" opacity="0.31"/>
<rect x="265.6" y="64.5" width="1" height="1" fill="#b9c3e6" opacity="0.25"/>
<rect x="251.4" y="61.6" width="1" height="1" fill="#b9c3e6" opacity="0.40"/>
<rect x="316.9" y="61.2" width="1" height="1" fill="#b9c3e6" opacity="0.42"/>
<rect x="319.8" y="58.2" width="1" height="1" fill="#b9c3e6" opacity="0.27"/>
<rect x="314.9" y="54.6" width="1" height="1" fill="#b9c3e6" opacity="0.24"/>
<rect x="354.5" y="52.9" width="1" height="1" fill="#b9c3e6" opacity="0.48"/>
<rect x="346.2" y="57.9" width="1" height="1" fill="#b9c3e6" opacity="0.47"/>
<rect x="273.6" y="58.3" width="1" height="1" fill="#b9c3e6" opacity="0.27"/>
<rect x="327.7" y="58.2" width="1" height="1" fill="#b9c3e6" opacity="0.27"/>
<rect x="254.7" y="61.0" width="1" height="1" fill="#b9c3e6" opacity="0.33"/>
<rect x="268.3" y="62.7" width="1" height="1" fill="#b9c3e6" opacity="0.37"/>
<rect x="372.1" y="59.1" width="1" height="1" fill="#b9c3e6" opacity="0.32"/>
<rect x="338.3" y="63.8" width="1" height="1" fill="#b9c3e6" opacity="0.27"/>
<rect x="312.0" y="58.8" width="1" height="1" fill="#b9c3e6" opacity="0.35"/>
<rect x="373.3" y="45.1" width="1" height="1" fill="#b9c3e6" opacity="0.39"/>
<rect x="278.1" y="60.7" width="1" height="1" fill="#b9c3e6" opacity="0.45"/>
<rect x="276.2" y="63.7" width="1" height="1" fill="#b9c3e6" opacity="0.27"/>
<rect x="375.0" y="54.3" width="1" height="1" fill="#b9c3e6" opacity="0.30"/>
<rect x="302.9" y="56.3" width="1" height="1" fill="#b9c3e6" opacity="0.21"/>
<rect x="298.6" y="62.7" width="1" height="1" fill="#b9c3e6" opacity="0.25"/>
<rect x="357.6" y="59.5" width="1" height="1" fill="#b9c3e6" opacity="0.28"/>
<rect x="309.0" y="58.4" width="1" height="1" fill="#b9c3e6" opacity="0.37"/>
<rect x="342.5" y="57.7" width="1" height="1" fill="#b9c3e6" opacity="0.24"/>
<rect x="374.8" y="56.0" width="1" height="1" fill="#b9c3e6" opacity="0.24"/>
<rect x="267.8" y="57.0" width="1" height="1" fill="#b9c3e6" opacity="0.47"/>
<rect x="257.4" y="61.0" width="1" height="1" fill="#b9c3e6" opacity="0.27"/>
<rect x="271.8" y="57.8" width="1" height="1" fill="#b9c3e6" opacity="0.32"/>
<rect x="365.5" y="53.2" width="1" height="1" fill="#b9c3e6" opacity="0.40"/>
<rect x="361.8" y="57.4" width="1" height="1" fill="#b9c3e6" opacity="0.48"/>
<rect x="303.0" y="58.1" width="1" height="1" fill="#b9c3e6" opacity="0.22"/>
<rect x="368.9" y="55.1" width="1" height="1" fill="#b9c3e6" opacity="0.29"/>
<rect x="287.6" y="60.0" width="1" height="1" fill="#b9c3e6" opacity="0.49"/>
<rect x="363.2" y="51.8" width="1" height="1" fill="#b9c3e6" opacity="0.45"/>
<rect x="354.9" y="57.3" width="1" height="1" fill="#b9c3e6" opacity="0.40"/>
<rect x="316.7" y="59.6" width="1" height="1" fill="#b9c3e6" opacity="0.40"/>
<rect x="326.2" y="58.8" width="1" height="1" fill="#b9c3e6" opacity="0.44"/>
<rect x="366.8" y="56.7" width="1" height="1" fill="#b9c3e6" opacity="0.22"/>
<rect x="366.7" y="54.4" width="1" height="1" fill="#b9c3e6" opacity="0.37"/>
<rect x="273.6" y="59.7" width="1" height="1" fill="#b9c3e6" opacity="0.27"/>
<rect x="297.6" y="56.9" width="1" height="1" fill="#b9c3e6" opacity="0.36"/>
<path d="M286 2 L290 0 L294 2 L292 4 L288 4Z" fill="#c9672a" opacity="0.8"/>
<circle cx="523" cy="48" r="1.2" fill="#e5c98a"/><circle cx="557" cy="99" r="1" fill="#e5c98a"/><circle cx="687" cy="58" r="1.2" fill="#dfe5f5"/>
<linearGradient id="btm" x1="0" y1="0" x2="0" y2="1"><stop offset="0" stop-color="#0b0e1c" stop-opacity="0"/><stop offset="1" stop-color="#0b0e1c" stop-opacity="0.95"/></linearGradient>
<rect x="0" y="70" width="470" height="39" fill="url(#btm)"/>
<path d="M392.6 0 L449.8 0 L442.8 58 L399.6 58Z" fill="url(#pil)"/>
<path d="M392.6 0 L449.8 0 L442.8 58 L399.6 58Z" fill="url(#pilv)"/>
<path d="M384.3 -3 L392.70000000000005 -3 L400.1 55 L393.1 55Z" fill="#0f1430" stroke="#6d7594" stroke-width="1.4" stroke-linejoin="round"/>
<path d="M458.1 -3 L449.7 -3 L442.3 55 L449.3 55Z" fill="#0f1430" stroke="#6d7594" stroke-width="1.4" stroke-linejoin="round"/>
<text x="414.2" y="21.5" textLength="14" lengthAdjust="spacingAndGlyphs" font-family="Liberation Sans" font-weight="bold" font-size="8" fill="#c9cfe3" stroke="#c9cfe3" stroke-width="0.55">5.0X</text>
<text x="415.5" y="48" textLength="11.5" lengthAdjust="spacingAndGlyphs" font-family="Liberation Sans" font-weight="bold" font-size="8" fill="#c9cfe3" stroke="#c9cfe3" stroke-width="0.55">1.6X</text>
<path d="M484.7 0 L540.7 0 L533.7 58 L491.7 58Z" fill="url(#pil)"/>
<path d="M484.7 0 L540.7 0 L533.7 58 L491.7 58Z" fill="url(#pilv)"/>
<path d="M476.4 -3 L484.8 -3 L492.2 55 L485.2 55Z" fill="#0f1430" stroke="#6d7594" stroke-width="1.4" stroke-linejoin="round"/>
<path d="M549.0 -3 L540.6 -3 L533.2 55 L540.2 55Z" fill="#0f1430" stroke="#6d7594" stroke-width="1.4" stroke-linejoin="round"/>
<text x="504.2" y="8" textLength="17" lengthAdjust="spacingAndGlyphs" font-family="Liberation Sans" font-weight="bold" font-size="8" fill="#c9cfe3" stroke="#c9cfe3" stroke-width="0.55">53.0X</text>
<text x="504.2" y="23.3" textLength="17" lengthAdjust="spacingAndGlyphs" font-family="Liberation Sans" font-weight="bold" font-size="8" fill="#c9cfe3" stroke="#c9cfe3" stroke-width="0.55">28.5X</text>
<text x="504.2" y="38.6" textLength="17" lengthAdjust="spacingAndGlyphs" font-family="Liberation Sans" font-weight="bold" font-size="8" fill="#c9cfe3" stroke="#c9cfe3" stroke-width="0.55">13.0X</text>
<text x="505.5" y="53.2" textLength="14.5" lengthAdjust="spacingAndGlyphs" font-family="Liberation Sans" font-weight="bold" font-size="8" fill="#c9cfe3" stroke="#c9cfe3" stroke-width="0.55">4.0X</text>
<path d="M583 0 L634 0 L627 58 L590 58Z" fill="url(#pil)"/>
<path d="M583 0 L634 0 L627 58 L590 58Z" fill="url(#pilv)"/>
<path d="M574.7 -3 L583.1 -3 L590.5 55 L583.5 55Z" fill="#0f1430" stroke="#6d7594" stroke-width="1.4" stroke-linejoin="round"/>
<path d="M642.3 -3 L633.9 -3 L626.5 55 L633.5 55Z" fill="#0f1430" stroke="#6d7594" stroke-width="1.4" stroke-linejoin="round"/>
<text x="600.5" y="14.6" textLength="16" lengthAdjust="spacingAndGlyphs" font-family="Liberation Sans" font-weight="bold" font-size="8" fill="#c9cfe3" stroke="#c9cfe3" stroke-width="0.55">16.5X</text>
<text x="601.5" y="33.3" textLength="14" lengthAdjust="spacingAndGlyphs" font-family="Liberation Sans" font-weight="bold" font-size="8" fill="#c9cfe3" stroke="#c9cfe3" stroke-width="0.55">8.0X</text>
<text x="601.5" y="52" textLength="14" lengthAdjust="spacingAndGlyphs" font-family="Liberation Sans" font-weight="bold" font-size="8" fill="#c9cfe3" stroke="#c9cfe3" stroke-width="0.55">2.5X</text>
<rect x="393" y="58.5" width="58" height="26.0" rx="2" fill="#0e1024" stroke="#737c9c" stroke-width="1.9"/>
<rect x="482.5" y="58.5" width="61.5" height="26.0" rx="2" fill="#0e1024" stroke="#737c9c" stroke-width="1.9"/>
<rect x="579.5" y="58.5" width="56.0" height="26.0" rx="2" fill="#0e1024" stroke="#737c9c" stroke-width="1.9"/>
<g><path d="M400 70 L421 57 L447 72 L426 86Z" fill="#1b1e36" stroke="#0a0b18" stroke-width="1"/><path d="M400 70 L426 86 L426 89 L400 73Z" fill="#2c2f4a"/><path d="M426 86 L447 72 L447 75 L426 89Z" fill="#22253d"/><path d="M407 69 L421 61 L440 72 L426 81Z" fill="#2a3670" stroke="#a08a52" stroke-width="0.9"/><path d="M416 68 L421 65 L430 71 L425 74Z" fill="#4a62c8"/><path d="M419 58 L424 56 L427 59 L422 61Z" fill="#d8bd72"/><path d="M399 68 L403 66 L405 74 L401 75Z" fill="#d6b96e"/><path d="M424 85 L429 84 L429 89 L425 89Z" fill="#d6b96e"/><path d="M444 71 L448 71 L448 76 L445 76Z" fill="#d6b96e"/></g>
<g><circle cx="492" cy="60" r="4.6" fill="none" stroke="#d8b463" stroke-width="2"/><path d="M488 63 Q485 68 489 72 Q494 74 497 71" fill="none" stroke="#c9a350" stroke-width="1.6" stroke-dasharray="1.6 0.9"/><ellipse cx="503" cy="62" rx="4" ry="5" transform="rotate(-35 503 62)" fill="none" stroke="#d8b463" stroke-width="2.6"/><path d="M506 67 L531 88" stroke="#3a2c14" stroke-width="6.5" stroke-linecap="round"/><path d="M506 67 L531 88" stroke="#d9b86a" stroke-width="5" stroke-linecap="butt"/><path d="M497 77 L519 60" stroke="#3a2c14" stroke-width="6"/><path d="M497 77 L519 60" stroke="#d9b86a" stroke-width="4.6"/><path d="M499 75.5 L517 61.5" stroke="#4c4aa8" stroke-width="2"/></g>
<g transform="translate(604 71) rotate(-32)"><path d="M-10 -13 H10 L14 -9 V9 L10 13 H-10 L-14 9 V-9Z" fill="#d9ba6d" stroke="#3a2c14" stroke-width="0.8"/><path d="M-8 -10 H8 L11 -7 V7 L8 10 H-8 L-11 7 V-7Z" fill="#8d4d84"/><path d="M-8 -10 L0 -1 L8 -10 M-11 7 L0 -1 L11 7" stroke="#c88bbd" stroke-width="1.2" fill="none"/><path d="M-8 -10 H8 L0 -1Z" fill="#b06aa6"/></g>
<circle cx="588" cy="58" r="2.2" fill="none" stroke="#55597a" stroke-width="1.2"/>
<rect x="123.5" y="15.5" width="61.5" height="19.0" fill="url(#btn)"/>
<path d="M124.5 34.5 V16.5 H184" stroke="#a0a7cc" stroke-width="1.6" fill="none"/>
<text x="141.2" y="28.3" textLength="26" lengthAdjust="spacingAndGlyphs" font-family="Liberation Sans" font-weight="bold" font-size="9" fill="#f4d25c" stroke="#f4d25c" stroke-width="0.7">COLLECT</text>
<rect x="286.5" y="15.5" width="61.5" height="18.5" fill="url(#btn)"/>
<path d="M287.5 34 V16.5 H347" stroke="#a0a7cc" stroke-width="1.6" fill="none"/>
<text x="290.8" y="28.1" textLength="53" lengthAdjust="spacingAndGlyphs" font-family="Liberation Sans" font-weight="bold" font-size="9" fill="#f4d25c" stroke="#f4d25c" stroke-width="0.7">PARTIAL COLLECT</text>
<text x="218.7" y="8" textLength="34" lengthAdjust="spacingAndGlyphs" font-family="Liberation Sans" font-weight="bold" font-size="8.5" fill="#f4c78a" stroke="#f4c78a" stroke-width="0.6">CASHPOT</text>
<rect x="201.5" y="15" width="69" height="20.5" rx="2" fill="#0b0c1b" stroke="#858cab" stroke-width="2"/>
<text x="232.8" y="29.5" textLength="6.5" lengthAdjust="spacingAndGlyphs" font-family="Liberation Sans" font-weight="bold" font-size="10" fill="#f2d79a" stroke="#f2d79a" stroke-width="0.6">0</text>
<text x="213.3" y="54.2" textLength="45" lengthAdjust="spacingAndGlyphs" font-family="Liberation Sans" font-weight="bold" font-size="9" fill="#a9b0d6" stroke="#a9b0d6" stroke-width="0.6">AUTO TOP TO</text>
<rect x="181.7" y="60.2" width="108" height="21.5" rx="2" fill="#0b0d1c" stroke="#8890b3" stroke-width="2"/>
<rect x="186.5" y="63" width="14.7" height="15.2" fill="#444b6d" stroke="#7f88ac" stroke-width="1"/>
<path d="M193.8 65.5 V75.7 M188.9 70.6 H198.7" stroke="#d0d6ee" stroke-width="2"/>
<rect x="271" y="63" width="14.8" height="15.2" fill="#444b6d" stroke="#7f88ac" stroke-width="1"/>
<path d="M273.5 70.6 H283.3" stroke="#d0d6ee" stroke-width="2"/>
<text x="224.6" y="75.1" textLength="22.5" lengthAdjust="spacingAndGlyphs" font-family="Liberation Sans" font-weight="bold" font-size="10" fill="#f2d79a" stroke="#f2d79a" stroke-width="0.7">500X</text>
<text x="208.5" y="99" textLength="55" lengthAdjust="spacingAndGlyphs" font-family="Liberation Sans" font-weight="bold" font-size="9" fill="#5d6384" stroke="#5d6384" stroke-width="0.7">HOUSE EDGE: 1%</text>
<path d="M124 93 H127 L131 89.5 V100.5 L127 97 H124Z" fill="#6d7393"/>
<g transform="translate(156 96)"><ellipse cx="0" cy="1.5" rx="4.5" ry="4.2" fill="#6d7393"/><path d="M-5 -1 C-4 -5 4 -5 5 -1Z" fill="#868cac"/><path d="M0 -4 L1.5 -7" stroke="#6d7393" stroke-width="1.2"/></g>
<rect x="300" y="80" width="20" height="1.8" rx="0.9" fill="#2e3a64" opacity="0.6"/>
<rect x="286" y="84.5" width="32" height="1.8" rx="0.9" fill="#2e3a64" opacity="0.6"/>
<rect x="290" y="88.5" width="26" height="1.8" rx="0.9" fill="#2e3a64" opacity="0.6"/>
<rect x="296" y="92.5" width="26" height="1.8" rx="0.9" fill="#2e3a64" opacity="0.6"/>
<rect x="288" y="96.5" width="30" height="1.8" rx="0.9" fill="#2e3a64" opacity="0.6"/>
<ellipse cx="328" cy="60" rx="8" ry="12" fill="#1e2a55" opacity="0.3" filter="url(#bl)"/>
<circle cx="326" cy="61" r="0.9" fill="#dfe5f5"/><ellipse cx="328" cy="75" rx="4" ry="1.5" fill="#9aa6c8"/>
</svg>
<div id="panel" class="a"></div>
<div class="t" style="left:56px;top:253.5px;font-size:11.2px;color:#8893a0;letter-spacing:-0.2px">AMOUNT</div>
<div class="a" style="left:56px;top:270px;width:287px;height:40.5px;background:#1f2a36;border-radius:3px"></div>
<svg class="coin" style="left:65.5px;top:281.5px" width="19" height="19" viewBox="0 0 20 20"><use href="#dg"/></svg>
<div class="t" style="left:93px;top:284px;font-size:13.5px;color:#f0f2f4">64</div>
<div class="a pb" style="left:191.5px">MAX</div>
<div class="a pb" style="left:229.8px">/2</div>
<div class="a pb" style="left:267px">x2</div>
<div class="a pb" style="left:304.5px">MIN</div>
<div class="t" style="left:378px;top:253.5px;font-size:11.2px;color:#8893a0;letter-spacing:-0.35px">NUMBER OF BETS</div>
<div class="a" style="left:378px;top:270px;width:140.5px;height:41px;background:#1f2a36;border-radius:3px"></div>
<div class="t" style="left:399.5px;top:284px;font-size:13.5px;color:#f0f2f4">0</div>
<div class="a" style="left:553.5px;top:270px;width:140.5px;height:41px;border-radius:3px;background:linear-gradient(90deg,#fbd947,#fcc23a 60%,#fcb52e)"></div>
<div class="t" style="left:553.5px;top:283.5px;width:140.5px;text-align:center;font-size:13.5px;color:#fff7e6">Bet</div>

<div class="t" style="left:258px;top:390.3px;font-size:14.3px;color:#bbb8a9;letter-spacing:-1.2px">ALL BETS</div>
<div class="t" style="left:441.3px;top:390.3px;font-size:14.3px;color:#bbb8a9;letter-spacing:-1.5px">MY BET</div>
<div class="hl" style="top:418px"></div>
<div class="a" style="left:401px;top:417px;width:126px;height:2.5px;background:#f2c94c;border-radius:1px"></div>
<div class="hd" style="left:14px">GAME ID</div>
<div class="hd" style="left:127px">HASH</div>
<div class="hd" style="left:239px">TIME</div>
<div class="hd" style="left:374px">PAYO...</div>
<div class="hd" style="left:554px">BET</div>
<div class="hd" style="left:698px">PROFIT</div>
<div class="hl" style="top:468px"></div>
<div class="row" style="top:468.30px"><span class="c id">4272</span><span class="c hs">B81MOCLI4V</span><span class="c tm">4:21:39 PM</span><span class="c po">0x</span><svg class="cn c1" viewBox="0 0 20 20"><use href="#dg"/></svg><span class="c am"><b>64.</b>0000000</span><span class="c dg1">DOGE</span><svg class="cn c2" viewBox="0 0 20 20"><use href="#dg"/></svg><span class="c pf"><b>0.</b>00000000</span><span class="c dg2">DOGE</span><div class="rl"></div></div>
<div class="row" style="top:523.60px"><span class="c id">4271</span><span class="c hs">NK0Q5GR2F3</span><span class="c tm">4:21:35 PM</span><span class="c po">0x</span><svg class="cn c1" viewBox="0 0 20 20"><use href="#dg"/></svg><span class="c am"><b>128.</b>000000</span><span class="c dg1">DOGE</span><svg class="cn c2" viewBox="0 0 20 20"><use href="#dg"/></svg><span class="c pf"><b>0.</b>00000000</span><span class="c dg2">DOGE</span><div class="rl"></div></div>
<div class="row" style="top:578.90px"><span class="c id">4270</span><span class="c hs">X9EILB9UMZ</span><span class="c tm">4:21:33 PM</span><span class="c po">0x</span><svg class="cn c1" viewBox="0 0 20 20"><use href="#dg"/></svg><span class="c am"><b>128.</b>000000</span><span class="c dg1">DOGE</span><svg class="cn c2" viewBox="0 0 20 20"><use href="#dg"/></svg><span class="c pf"><b>0.</b>00000000</span><span class="c dg2">DOGE</span><div class="rl"></div></div>
<div class="row" style="top:634.20px"><span class="c id">4269</span><span class="c hs">BJQ7TY7TAZ</span><span class="c tm">4:21:31 PM</span><span class="c po">0x</span><svg class="cn c1" viewBox="0 0 20 20"><use href="#dg"/></svg><span class="c am"><b>128.</b>000000</span><span class="c dg1">DOGE</span><svg class="cn c2" viewBox="0 0 20 20"><use href="#dg"/></svg><span class="c pf"><b>0.</b>00000000</span><span class="c dg2">DOGE</span><div class="rl"></div></div>
<div class="row" style="top:689.50px"><span class="c id">4268</span><span class="c hs">CN7VYKY2YF</span><span class="c tm">4:21:30 PM</span><span class="c po">0x</span><svg class="cn c1" viewBox="0 0 20 20"><use href="#dg"/></svg><span class="c am"><b>128.</b>000000</span><span class="c dg1">DOGE</span><svg class="cn c2" viewBox="0 0 20 20"><use href="#dg"/></svg><span class="c pf"><b>0.</b>00000000</span><span class="c dg2">DOGE</span><div class="rl"></div></div>
<div class="row" style="top:744.80px"><span class="c id">4267</span><span class="c hs">DOTZLLDZ83</span><span class="c tm">4:21:26 PM</span><span class="c po">0x</span><svg class="cn c1" viewBox="0 0 20 20"><use href="#dg"/></svg><span class="c am"><b>128.</b>000000</span><span class="c dg1">DOGE</span><svg class="cn c2" viewBox="0 0 20 20"><use href="#dg"/></svg><span class="c pf"><b>0.</b>00000000</span><span class="c dg2">DOGE</span><div class="rl"></div></div>
<div class="row" style="top:800.10px"><span class="c id">4266</span><span class="c hs">YPWW8ZNPZN</span><span class="c tm">4:21:25 PM</span><span class="c po">0x</span><svg class="cn c1" viewBox="0 0 20 20"><use href="#dg"/></svg><span class="c am"><b>128.</b>000000</span><span class="c dg1">DOGE</span><svg class="cn c2" viewBox="0 0 20 20"><use href="#dg"/></svg><span class="c pf"><b>0.</b>00000000</span><span class="c dg2">DOGE</span><div class="rl"></div></div>
<div class="row" style="top:855.40px"><span class="c id">4265</span><span class="c hs">Z1JAE0X68V</span><span class="c tm">4:21:21 PM</span><span class="c po">0x</span><svg class="cn c1" viewBox="0 0 20 20"><use href="#dg"/></svg><span class="c am"><b>128.</b>000000</span><span class="c dg1">DOGE</span><svg class="cn c2" viewBox="0 0 20 20"><use href="#dg"/></svg><span class="c pf"><b>0.</b>00000000</span><span class="c dg2">DOGE</span><div class="rl"></div></div>
<div class="row" style="top:910.70px"><span class="c id">4264</span><span class="c hs">MKIIIYJVRZ</span><span class="c tm">4:21:19 PM</span><span class="c po">0x</span><svg class="cn c1" viewBox="0 0 20 20"><use href="#dg"/></svg><span class="c am"><b>128.</b>000000</span><span class="c dg1">DOGE</span><svg class="cn c2" viewBox="0 0 20 20"><use href="#dg"/></svg><span class="c pf"><b>0.</b>00000000</span><span class="c dg2">DOGE</span><div class="rl"></div></div>
<div class="row" style="top:966.00px"><span class="c id">4263</span><span class="c hs">FA3Z6LR8AR</span><span class="c tm">4:21:18 PM</span><span class="c po">0x</span><svg class="cn c1" viewBox="0 0 20 20"><use href="#dg"/></svg><span class="c am"><b>128.</b>000000</span><span class="c dg1">DOGE</span><svg class="cn c2" viewBox="0 0 20 20"><use href="#dg"/></svg><span class="c pf"><b>0.</b>00000000</span><span class="c dg2">DOGE</span><div class="rl"></div></div>
<div class="row" style="top:1021.30px"><span class="c id">4262</span><span class="c hs">Z14UTCPWCR</span><span class="c tm">4:21:14 PM</span><span class="c po">0x</span><svg class="cn c1" viewBox="0 0 20 20"><use href="#dg"/></svg><span class="c am"><b>64.</b>0000000</span><span class="c dg1">DOGE</span><svg class="cn c2" viewBox="0 0 20 20"><use href="#dg"/></svg><span class="c pf"><b>0.</b>00000000</span><span class="c dg2">DOGE</span><div class="rl"></div></div>
<div class="row" style="top:1076.60px"><span class="c id">4261</span><span class="c hs">XNVOOS6ERR</span><span class="c tm">4:21:12 PM</span><span class="c po">-8.1x</span><svg class="cn c1" viewBox="0 0 20 20"><use href="#dg"/></svg><span class="c am"><b>64.</b>0000000</span><span class="c dg1">DOGE</span><svg class="cn c2" viewBox="0 0 20 20"><use href="#dg"/></svg><span class="c pf"><b>-518.4</b>0000</span><span class="c dg2">DOGE</span><div class="rl"></div></div>
<div class="row" style="top:1131.90px"><span class="c id">4260</span><span class="c hs">REJE8PTHER</span><span class="c tm">4:21:09 PM</span><span class="c po">-8.5x</span><svg class="cn c1" viewBox="0 0 20 20"><use href="#dg"/></svg><span class="c am"><b>64.</b>0000000</span><span class="c dg1">DOGE</span><svg class="cn c2" viewBox="0 0 20 20"><use href="#dg"/></svg><span class="c pf"><b>-100.</b>000000</span><span class="c dg2">DOGE</span><div class="rl"></div></div>
<div id="nav" class="a"></div>
<div class="a" style="left:202px;top:1172px;width:2px;height:13.5px;background:#6b6b6b"></div>
<div class="a" style="left:208px;top:1172px;width:2px;height:13.5px;background:#6b6b6b"></div>
<div class="a" style="left:214px;top:1172px;width:2px;height:13.5px;background:#6b6b6b"></div>
<div class="a" style="left:366px;top:1171px;width:16px;height:15.5px;border:1.8px solid #6b6b6b;border-radius:5px"></div>
<svg class="a" style="left:532px;top:1170px" width="13" height="17" viewBox="0 0 13 17"><path d="M10.5 1.5 L3 8.5 L10.5 15.5" stroke="#6b6b6b" stroke-width="1.9" fill="none"/></svg>
</body></html>
